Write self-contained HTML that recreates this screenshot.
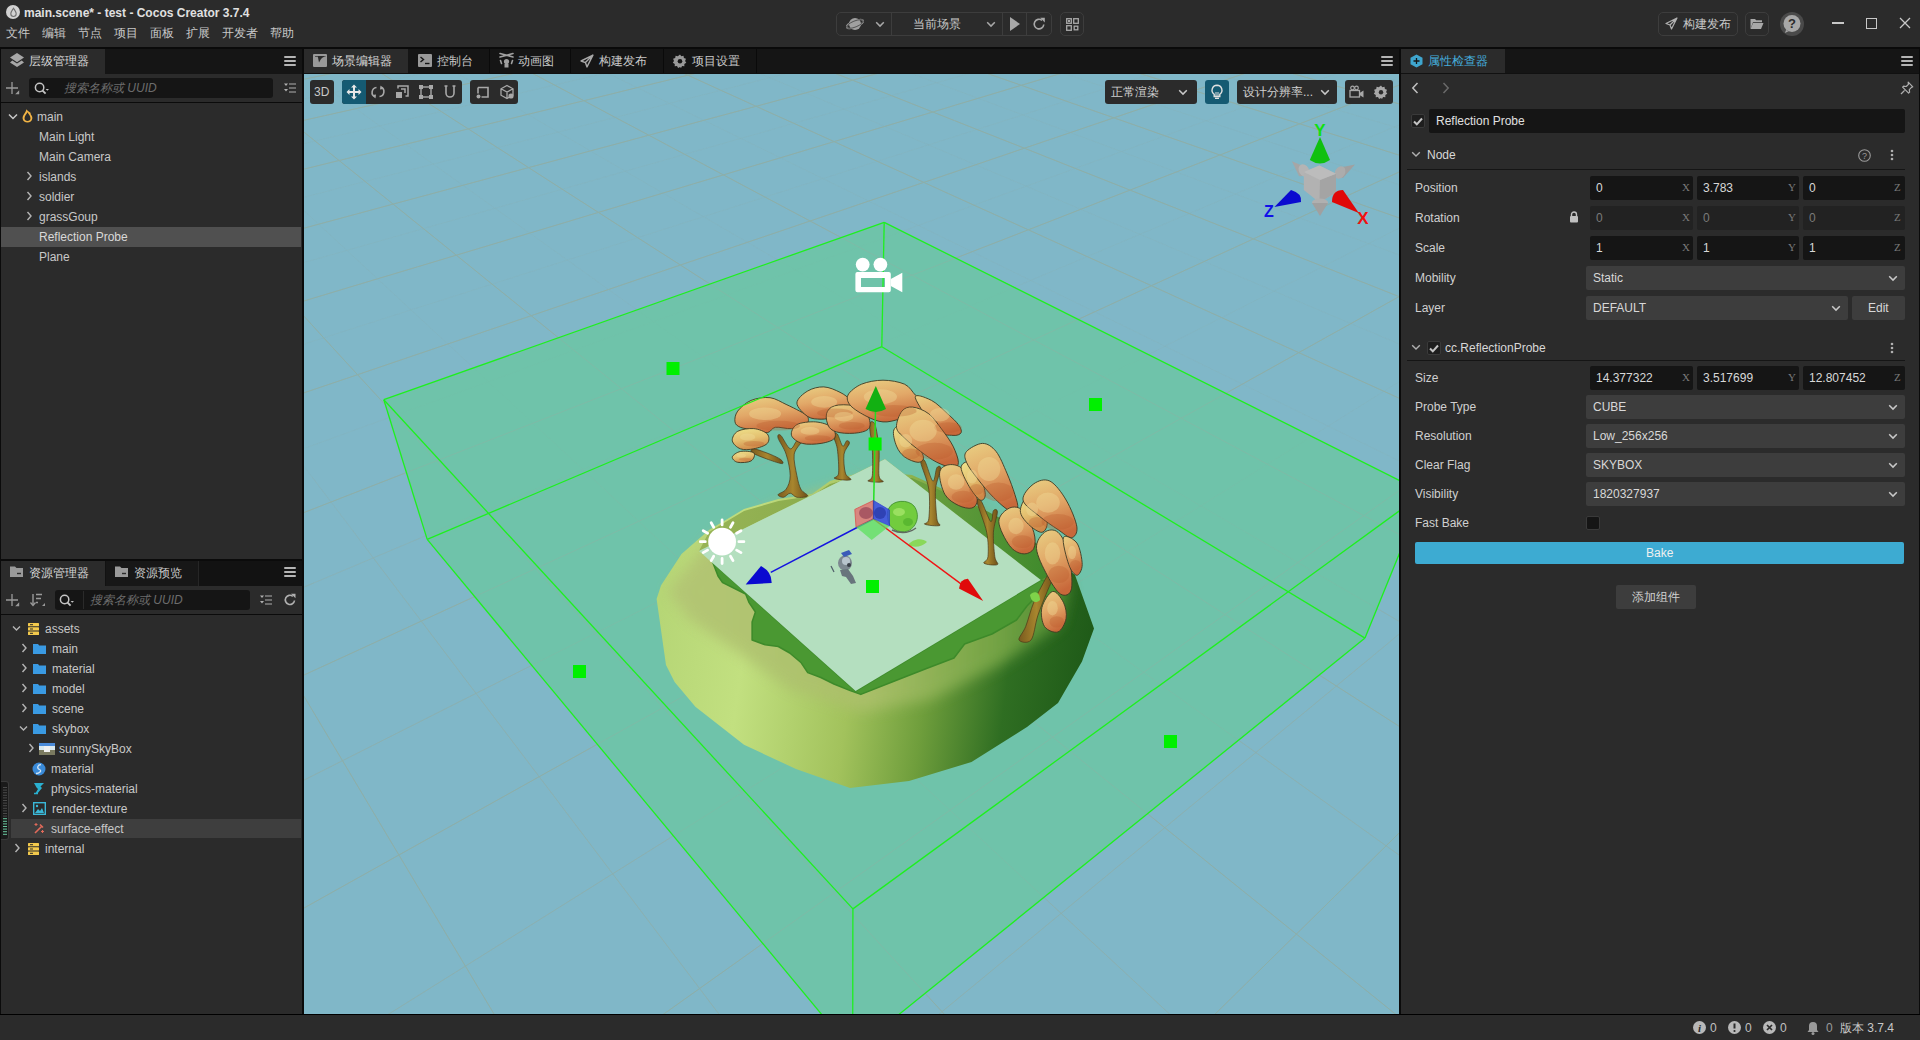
<!DOCTYPE html>
<html><head><meta charset="utf-8">
<style>
*{box-sizing:border-box;margin:0;padding:0}
html,body{width:1920px;height:1040px;overflow:hidden;background:#2b2b2b;font-family:"Liberation Sans",sans-serif;font-size:12px;color:#c8c8c8}
.a{position:absolute}
.t{position:absolute;white-space:nowrap;line-height:14px}
.sep{position:absolute;background:#0b0b0b}
svg{position:absolute;overflow:visible}
.btn{position:absolute;border:1px solid #3d3d3d;border-radius:5px}
.tabbar{position:absolute;background:#151515}
.tab{position:absolute;background:#2b2b2b}
.inp{position:absolute;background:#151515;border-radius:3px}
.sel{position:absolute;background:#3d3d3d;border-radius:2px}
.ham{position:absolute;width:12px;height:10px}
.ham i{position:absolute;left:0;width:12px;height:2px;background:#b4b4b4;border-radius:1px}
</style></head><body>
<!-- TITLE BAR -->
<div class="a" style="left:0;top:0;width:1920px;height:47px;background:#2b2b2b"></div>
<svg style="left:6px;top:5px" width="15" height="15" viewBox="0 0 15 15"><circle cx="7" cy="7" r="7" fill="#d2d2d2"/><path d="M7.5 3.2 C6 5.5 4.8 7 4.8 8.8 A2.7 2.7 0 0 0 10.2 8.8 C10.2 7 9 5.5 7.5 3.2Z" fill="none" stroke="#707070" stroke-width="1.1"/></svg>
<div class="t" style="left:24px;top:6px;font-weight:bold;color:#e0e0e0">main.scene* - test - Cocos Creator 3.7.4</div>
<div class="t" style="left:6px;top:26px;color:#c8c8c8;word-spacing:0">文件</div>
<div class="t" style="left:42px;top:26px">编辑</div>
<div class="t" style="left:78px;top:26px">节点</div>
<div class="t" style="left:114px;top:26px">项目</div>
<div class="t" style="left:150px;top:26px">面板</div>
<div class="t" style="left:186px;top:26px">扩展</div>
<div class="t" style="left:222px;top:26px">开发者</div>
<div class="t" style="left:270px;top:26px">帮助</div>

<div class="sep" style="left:0;top:47px;width:1920px;height:2px;background:#0a0a0a"></div>

<!-- STATUS BAR -->
<div class="a" style="left:0;top:1015px;width:1920px;height:25px;background:#2b2b2b"></div>
<div class="sep" style="left:0;top:1014px;width:1920px;height:1px;background:#000"></div>


<!-- HIERARCHY PANEL -->
<div class="tabbar" style="left:1px;top:49px;width:301px;height:25px"></div>
<div class="tab" style="left:1px;top:49px;width:104px;height:25px"></div>
<svg style="left:10px;top:53px" width="14" height="15" viewBox="0 0 14 15"><path d="M7 0 L14 4.6 L7 9.2 L0 4.6Z" fill="#a8a8a8"/><path d="M2.3 7.6 L0 9.4 L7 14 L14 9.4 L11.7 7.6 L7 10.6Z" fill="#a8a8a8"/></svg>
<div class="t" style="left:29px;top:54px;color:#d6d6d6">层级管理器</div>
<div class="ham" style="left:284px;top:56px"><i style="top:0"></i><i style="top:4px"></i><i style="top:8px"></i></div>
<svg style="left:6px;top:82px" width="14" height="13" viewBox="0 0 14 13"><path d="M6 0v12M0 6h12" stroke="#9a9a9a" stroke-width="1.3"/><path d="M13.2 8.2v4h-4z" fill="#9a9a9a"/></svg>
<div class="inp" style="left:29px;top:78px;width:244px;height:20px"></div>
<svg style="left:34px;top:82px" width="16" height="13" viewBox="0 0 16 13"><circle cx="5.6" cy="5.5" r="4.2" fill="none" stroke="#c4c4c4" stroke-width="1.5"/><path d="M8.6 8.6l3 3" stroke="#c4c4c4" stroke-width="1.8"/><path d="M11.6 7h3.4l-1.7 1.8z" fill="#c4c4c4"/></svg>
<div class="t" style="left:64px;top:81px;color:#6c6c6c;font-style:italic">搜索名称或 UUID</div>
<svg style="left:284px;top:83px" width="12" height="11" viewBox="0 0 12 11"><path d="M0 0.5h4l-2 2.5z M0 6h4l-2 2.5z" fill="#b0b0b0"/><path d="M5 1h7M5 5h7M5 9h7" stroke="#b0b0b0" stroke-width="1.2"/></svg>
<div class="sep" style="left:1px;top:102px;width:301px;height:1px"></div>

<svg style="left:8px;top:113px" width="10" height="8" viewBox="0 0 10 8"><path d="M1 1.5l4 4 4-4" fill="none" stroke="#c8c8c8" stroke-width="1.5"/></svg>
<svg style="left:22px;top:109px" width="11" height="14" viewBox="0 0 11 14"><path fill-rule="evenodd" fill="#f2b445" d="M4.3 0.2 C5 1 5.5 1.5 6 2 L8.5 3.8 L8.8 5.5 C10 6.8 10.5 8 10.3 9.5 C10 12 8 13.5 5.5 13.5 C3 13.5 0.8 12 0.6 9.5 C0.4 7.5 1.5 5.8 2.6 4.2 C3.5 3 4.3 1.5 4.3 0.2Z M5.5 3.2 C4.5 5 2.5 7 2.5 9.3 C2.5 11 3.8 12 5.5 12 C7.2 12 8.5 11 8.5 9.3 C8.5 7 6.5 5 5.5 3.2Z"/></svg>
<div class="t" style="left:37px;top:110px">main</div>
<div class="t" style="left:39px;top:130px">Main Light</div>
<div class="t" style="left:39px;top:150px">Main Camera</div>
<svg style="left:26px;top:171px" width="7" height="10" viewBox="0 0 7 10"><path d="M1.5 1l3.5 4-3.5 4" fill="none" stroke="#b4b4b4" stroke-width="1.4"/></svg>
<div class="t" style="left:39px;top:170px">islands</div>
<svg style="left:26px;top:191px" width="7" height="10" viewBox="0 0 7 10"><path d="M1.5 1l3.5 4-3.5 4" fill="none" stroke="#b4b4b4" stroke-width="1.4"/></svg>
<div class="t" style="left:39px;top:190px">soldier</div>
<svg style="left:26px;top:211px" width="7" height="10" viewBox="0 0 7 10"><path d="M1.5 1l3.5 4-3.5 4" fill="none" stroke="#b4b4b4" stroke-width="1.4"/></svg>
<div class="t" style="left:39px;top:210px">grassGoup</div>
<div class="a" style="left:1px;top:227px;width:300px;height:20px;background:#505050"></div>
<div class="t" style="left:39px;top:230px;color:#d8d8d8">Reflection Probe</div>
<div class="t" style="left:39px;top:250px">Plane</div>

<div class="sep" style="left:1px;top:559px;width:301px;height:2px"></div>

<!-- ASSETS PANEL -->
<div class="tabbar" style="left:1px;top:561px;width:301px;height:25px;background:#121212"></div>
<div class="tab" style="left:1px;top:561px;width:104px;height:25px"></div>
<div class="a" style="left:106px;top:561px;width:93px;height:25px;background:#171717;border-right:1px solid #262626"></div>
<svg style="left:9px;top:565px" width="15" height="13" viewBox="0 0 15 13"><path d="M1 1.5h5l1.5 1.5H14v9H1z" fill="#9a9a9a"/><path d="M8 8.5h4" stroke="#2b2b2b" stroke-width="1.4"/></svg>
<div class="t" style="left:29px;top:566px;color:#d6d6d6">资源管理器</div>
<svg style="left:114px;top:565px" width="15" height="13" viewBox="0 0 15 13"><path d="M1 1.5h5l1.5 1.5H14v9H1z" fill="#9a9a9a"/><path d="M8 8.5h4" stroke="#2b2b2b" stroke-width="1.4"/></svg>
<div class="t" style="left:134px;top:566px;color:#c8c8c8">资源预览</div>
<div class="ham" style="left:284px;top:567px"><i style="top:0"></i><i style="top:4px"></i><i style="top:8px"></i></div>
<svg style="left:6px;top:594px" width="14" height="13" viewBox="0 0 14 13"><path d="M6 0v12M0 6h12" stroke="#9a9a9a" stroke-width="1.3"/><path d="M13.2 8.2v4h-4z" fill="#9a9a9a"/></svg>
<svg style="left:30px;top:593px" width="16" height="14" viewBox="0 0 16 14"><path d="M3 1v11" stroke="#9a9a9a" stroke-width="1.4"/><path d="M0.5 9.5l2.5 3 2.5-3" fill="none" stroke="#9a9a9a" stroke-width="1.3"/><path d="M6 1.5h6M6 5.5h5M6 9.5h2" stroke="#9a9a9a" stroke-width="1.4"/><path d="M15 10v3h-3z" fill="#9a9a9a"/></svg>
<div class="inp" style="left:55px;top:590px;width:195px;height:20px"></div>
<div class="a" style="left:83px;top:591px;width:1px;height:18px;background:#2a2a2a"></div>
<svg style="left:59px;top:594px" width="16" height="13" viewBox="0 0 16 13"><circle cx="5.6" cy="5.5" r="4.2" fill="none" stroke="#c4c4c4" stroke-width="1.5"/><path d="M8.6 8.6l3 3" stroke="#c4c4c4" stroke-width="1.8"/><path d="M11.6 7h3.4l-1.7 1.8z" fill="#c4c4c4"/></svg>
<div class="t" style="left:90px;top:593px;color:#6c6c6c;font-style:italic">搜索名称或 UUID</div>
<svg style="left:260px;top:595px" width="12" height="11" viewBox="0 0 12 11"><path d="M0 0.5h4l-2 2.5z M0 6h4l-2 2.5z" fill="#b0b0b0"/><path d="M5 1h7M5 5h7M5 9h7" stroke="#b0b0b0" stroke-width="1.2"/></svg>
<svg style="left:283px;top:593px" width="14" height="14" viewBox="0 0 14 14"><path d="M11.5 7.5A4.6 4.6 0 1 1 9.8 3.3" fill="none" stroke="#b0b0b0" stroke-width="1.6"/><path d="M8 0.8h4.5v4.5z" fill="#b0b0b0"/></svg>
<div class="sep" style="left:1px;top:614px;width:301px;height:1px"></div>

<!-- ASSET TREE --><svg style="left:12px;top:625px" width="9" height="7" viewBox="0 0 9 7"><path d="M1 1.5l3.5 3.5 3.5-3.5" fill="none" stroke="#b4b4b4" stroke-width="1.4"/></svg><svg style="left:28px;top:623px" width="11" height="12" viewBox="0 0 11 12"><g fill="#f2c94c"><rect x="0" y="0" width="11" height="3.3" rx="0.5"/><rect x="0" y="4.3" width="11" height="3.3" rx="0.5"/><rect x="0" y="8.6" width="11" height="3.3" rx="0.5"/></g><g fill="#2b2b2b"><rect x="2" y="1.2" width="3" height="1"/><rect x="2" y="5.5" width="3" height="1"/><rect x="2" y="9.8" width="3" height="1"/></g></svg><div class="t" style="left:45px;top:622px;color:#c8c8c8">assets</div><svg style="left:21px;top:643px" width="7" height="10" viewBox="0 0 7 10"><path d="M1.5 1l3.5 4-3.5 4" fill="none" stroke="#b4b4b4" stroke-width="1.4"/></svg><svg style="left:33px;top:644px" width="13" height="10" viewBox="0 0 13 10"><path d="M0 0h5l1.2 1.5H13V10H0Z" fill="#3a9ae2"/></svg><div class="t" style="left:52px;top:642px;color:#c8c8c8">main</div><svg style="left:21px;top:663px" width="7" height="10" viewBox="0 0 7 10"><path d="M1.5 1l3.5 4-3.5 4" fill="none" stroke="#b4b4b4" stroke-width="1.4"/></svg><svg style="left:33px;top:664px" width="13" height="10" viewBox="0 0 13 10"><path d="M0 0h5l1.2 1.5H13V10H0Z" fill="#3a9ae2"/></svg><div class="t" style="left:52px;top:662px;color:#c8c8c8">material</div><svg style="left:21px;top:683px" width="7" height="10" viewBox="0 0 7 10"><path d="M1.5 1l3.5 4-3.5 4" fill="none" stroke="#b4b4b4" stroke-width="1.4"/></svg><svg style="left:33px;top:684px" width="13" height="10" viewBox="0 0 13 10"><path d="M0 0h5l1.2 1.5H13V10H0Z" fill="#3a9ae2"/></svg><div class="t" style="left:52px;top:682px;color:#c8c8c8">model</div><svg style="left:21px;top:703px" width="7" height="10" viewBox="0 0 7 10"><path d="M1.5 1l3.5 4-3.5 4" fill="none" stroke="#b4b4b4" stroke-width="1.4"/></svg><svg style="left:33px;top:704px" width="13" height="10" viewBox="0 0 13 10"><path d="M0 0h5l1.2 1.5H13V10H0Z" fill="#3a9ae2"/></svg><div class="t" style="left:52px;top:702px;color:#c8c8c8">scene</div><svg style="left:19px;top:725px" width="9" height="7" viewBox="0 0 9 7"><path d="M1 1.5l3.5 3.5 3.5-3.5" fill="none" stroke="#b4b4b4" stroke-width="1.4"/></svg><svg style="left:33px;top:724px" width="13" height="10" viewBox="0 0 13 10"><path d="M0 0h5l1.2 1.5H13V10H0Z" fill="#3a9ae2"/></svg><div class="t" style="left:52px;top:722px;color:#c8c8c8">skybox</div><svg style="left:28px;top:743px" width="7" height="10" viewBox="0 0 7 10"><path d="M1.5 1l3.5 4-3.5 4" fill="none" stroke="#b4b4b4" stroke-width="1.4"/></svg><svg style="left:39px;top:743px" width="16" height="12" viewBox="0 0 16 12"><rect x="0" y="0" width="16" height="12" fill="#8aa8c8"/><rect x="0" y="0" width="16" height="3" fill="#4a8ad8"/><rect x="0" y="3" width="16" height="4" fill="#d8e8f0"/><rect x="0" y="7" width="16" height="5" fill="#7a7a60"/><rect x="5" y="3" width="6" height="6" fill="#f0f0f0"/></svg><div class="t" style="left:59px;top:742px;color:#c8c8c8">sunnySkyBox</div><svg style="left:32px;top:762px" width="14" height="14" viewBox="0 0 14 14"><circle cx="7" cy="7" r="6.5" fill="#3a8ad8"/><path d="M9 2.5C5.5 3 4.5 6 7.5 7.5S7 11.5 4 11.5" fill="none" stroke="#d0e4f4" stroke-width="1.3"/></svg><div class="t" style="left:51px;top:762px;color:#c8c8c8">material</div><svg style="left:33px;top:782px" width="12" height="13" viewBox="0 0 12 13"><path d="M1 1h10L7.5 4.5 9 6 4 12H2l3-5L3.5 5.5Z" fill="#2ab0d0"/><path d="M1 11.5h4" stroke="#2ab0d0" stroke-width="1.5"/></svg><div class="t" style="left:51px;top:782px;color:#c8c8c8">physics-material</div><svg style="left:21px;top:803px" width="7" height="10" viewBox="0 0 7 10"><path d="M1.5 1l3.5 4-3.5 4" fill="none" stroke="#b4b4b4" stroke-width="1.4"/></svg><svg style="left:33px;top:802px" width="13" height="13" viewBox="0 0 13 13"><rect x="0.7" y="0.7" width="11.6" height="11.6" fill="none" stroke="#3ab8d8" stroke-width="1.4"/><path d="M2 11l3-4 2 2 2-3 2 5Z" fill="#3ab8d8"/><circle cx="4" cy="4" r="1.2" fill="#3ab8d8"/></svg><div class="t" style="left:52px;top:802px;color:#c8c8c8">render-texture</div><div class="a" style="left:11px;top:819px;width:290px;height:19px;background:#3e3e3e"></div><svg style="left:33px;top:822px" width="12" height="13" viewBox="0 0 12 13"><path d="M2 11L9 4M7 2.5l3 3" stroke="#e06a5a" stroke-width="1.6"/><path d="M3 1v3M1.5 2.5h3M9.5 8v3M8 9.5h3" stroke="#e06a5a" stroke-width="1.1"/></svg><div class="t" style="left:51px;top:822px;color:#c8c8c8">surface-effect</div><svg style="left:14px;top:843px" width="7" height="10" viewBox="0 0 7 10"><path d="M1.5 1l3.5 4-3.5 4" fill="none" stroke="#b4b4b4" stroke-width="1.4"/></svg><svg style="left:28px;top:843px" width="11" height="12" viewBox="0 0 11 12"><g fill="#f2c94c"><rect x="0" y="0" width="11" height="3.3" rx="0.5"/><rect x="0" y="4.3" width="11" height="3.3" rx="0.5"/><rect x="0" y="8.6" width="11" height="3.3" rx="0.5"/></g><g fill="#2b2b2b"><rect x="2" y="1.2" width="3" height="1"/><rect x="2" y="5.5" width="3" height="1"/><rect x="2" y="9.8" width="3" height="1"/></g></svg><div class="t" style="left:45px;top:842px;color:#c8c8c8">internal</div><div class="a" style="left:0px;top:781px;width:9px;height:59px;background:#1a1a1a;border:1px solid #3a3a3a;border-left:none;border-radius:0 3px 3px 0"></div><svg style="left:3px;top:786px" width="4" height="50" viewBox="0 0 4 50"><g stroke-width="1"><path d="M0 1.5h4" stroke="#4a4a4a"/><path d="M0 4.1h4" stroke="#4a4a4a"/><path d="M0 6.7h4" stroke="#4a4a4a"/><path d="M0 9.3h4" stroke="#4a4a4a"/><path d="M0 11.9h4" stroke="#4a4a4a"/><path d="M0 14.5h4" stroke="#4a4a4a"/><path d="M0 17.1h4" stroke="#4a4a4a"/><path d="M0 19.7h4" stroke="#4a4a4a"/><path d="M0 22.3h4" stroke="#4a4a4a"/><path d="M0 24.900000000000002h4" stroke="#4a4a4a"/><path d="M0 27.5h4" stroke="#4a4a4a"/><path d="M0 30.1h4" stroke="#4a4a4a"/><path d="M0 32.7h4" stroke="#6ac8a0"/><path d="M0 35.300000000000004h4" stroke="#6ac8a0"/><path d="M0 37.9h4" stroke="#6ac8a0"/><path d="M0 40.5h4" stroke="#6ac8a0"/><path d="M0 43.1h4" stroke="#6ac8a0"/><path d="M0 45.7h4" stroke="#6ac8a0"/><path d="M0 48.300000000000004h4" stroke="#6ac8a0"/></g></svg>
<!--SCENE--><svg style="left:304px;top:74px" width="1095" height="940" viewBox="304 74 1095 940">
<defs>
<clipPath id="sc"><rect x="304" y="74" width="1095" height="940"/></clipPath>
<linearGradient id="isl" gradientUnits="userSpaceOnUse" x1="656" y1="640" x2="1094" y2="700">
<stop offset="0" stop-color="#b6d676"/><stop offset="0.2" stop-color="#c2e080"/><stop offset="0.45" stop-color="#a2c25c"/><stop offset="0.62" stop-color="#6f9e3c"/><stop offset="0.8" stop-color="#2f6e22"/><stop offset="1" stop-color="#1d5817"/>
</linearGradient>
<linearGradient id="islTop" gradientUnits="userSpaceOnUse" x1="660" y1="600" x2="1080" y2="600">
<stop offset="0" stop-color="#b3c474"/><stop offset="0.5" stop-color="#abc06a"/><stop offset="0.8" stop-color="#7aa848"/><stop offset="1" stop-color="#4a8a30"/>
</linearGradient>
<filter id="blur6" x="-20%" y="-20%" width="140%" height="140%"><feGaussianBlur stdDeviation="7"/></filter>
<filter id="blur2" x="-20%" y="-20%" width="140%" height="140%"><feGaussianBlur stdDeviation="1.2"/></filter>
<linearGradient id="trunk" x1="0" y1="0" x2="1" y2="0"><stop offset="0" stop-color="#7a5a1e"/><stop offset="0.5" stop-color="#a8862e"/><stop offset="1" stop-color="#6e5018"/></linearGradient>
<linearGradient id="ground" gradientUnits="userSpaceOnUse" x1="700" y1="500" x2="1050" y2="560"><stop offset="0" stop-color="#98b456"/><stop offset="0.35" stop-color="#8aac4c"/><stop offset="0.7" stop-color="#5f9a3a"/><stop offset="1" stop-color="#3f8a2c"/></linearGradient>
<linearGradient id="leafY" x1="0.2" y1="0" x2="0.5" y2="1"><stop offset="0" stop-color="#eee08a"/><stop offset="0.5" stop-color="#e4c070"/><stop offset="1" stop-color="#d08848"/></linearGradient>
<linearGradient id="leaf" x1="0.2" y1="0" x2="0.5" y2="1"><stop offset="0" stop-color="#e8cc80"/><stop offset="0.45" stop-color="#e2a868"/><stop offset="1" stop-color="#c8683a"/></linearGradient>
</defs>
<g clip-path="url(#sc)">
<rect x="304" y="74" width="1095" height="940" fill="#80b7c8"/>
<g stroke="#a39c9c" stroke-width="1" fill="none" opacity="0.55"><path opacity="0.12" d="M320.8 57.6L292.3 63.3M292.3 63.3L263.2 69.1M500.9 56.6L474.7 62.2M474.7 62.2L447.8 68.0M447.8 68.0L420.3 73.9M420.3 73.9L392.0 80.0M392.0 80.0L363.0 86.2M363.0 86.2L333.3 92.6M333.3 92.6L302.8 99.1M302.8 99.1L271.5 105.8M1300.0 54.6L1324.9 61.4M1324.9 61.4L1350.5 68.4M1350.5 68.4L1376.9 75.6M1376.9 75.6L1404.2 83.1M1404.2 83.1L1432.3 90.7M680.8 55.5L656.8 61.1M656.8 61.1L632.2 66.9M632.2 66.9L606.9 72.8M606.9 72.8L581.0 78.8M581.0 78.8L554.5 85.0M554.5 85.0L527.3 91.4M527.3 91.4L499.3 97.9M499.3 97.9L470.6 104.6M470.6 104.6L441.2 111.5M441.2 111.5L410.9 118.6M410.9 118.6L379.8 125.9M379.8 125.9L347.9 133.3M347.9 133.3L315.0 141.0M315.0 141.0L281.2 148.9M1160.5 56.8L1183.4 63.7M1183.4 63.7L1206.9 70.7M1206.9 70.7L1231.2 78.0M1231.2 78.0L1256.3 85.5M1256.3 85.5L1282.1 93.2M1282.1 93.2L1308.8 101.3M1308.8 101.3L1336.4 109.5M1336.4 109.5L1364.9 118.1M1364.9 118.1L1394.5 126.9M1394.5 126.9L1425.0 136.1M860.4 54.5L838.6 60.1M838.6 60.1L816.2 65.8M816.2 65.8L793.3 71.7M793.3 71.7L769.8 77.7M769.8 77.7L745.6 83.9M745.6 83.9L720.9 90.3M720.9 90.3L695.5 96.8M695.5 96.8L669.5 103.4M669.5 103.4L642.7 110.3M642.7 110.3L615.2 117.4M615.2 117.4L587.0 124.6M587.0 124.6L558.0 132.1M558.0 132.1L528.1 139.7M528.1 139.7L497.4 147.6M497.4 147.6L465.8 155.7M465.8 155.7L433.2 164.1M433.2 164.1L399.7 172.7M399.7 172.7L365.1 181.5M365.1 181.5L329.5 190.7M329.5 190.7L292.7 200.1M292.7 200.1L254.8 209.8M1020.1 59.0L1040.9 65.9M1040.9 65.9L1062.3 73.0M1062.3 73.0L1084.4 80.4M1084.4 80.4L1107.2 87.9M1107.2 87.9L1130.8 95.8M1130.8 95.8L1155.1 103.8M1155.1 103.8L1180.2 112.2M1180.2 112.2L1206.2 120.8M1206.2 120.8L1233.1 129.7M1233.1 129.7L1260.9 139.0M1260.9 139.0L1289.8 148.6M1289.8 148.6L1319.6 158.5M1319.6 158.5L1350.6 168.8M1350.6 168.8L1382.8 179.5M1382.8 179.5L1416.2 190.5M1020.1 59.0L999.9 64.7M999.9 64.7L979.3 70.6M979.3 70.6L958.2 76.6M958.2 76.6L936.5 82.8M936.5 82.8L914.2 89.1M914.2 89.1L891.4 95.6M891.4 95.6L868.0 102.3M868.0 102.3L843.9 109.1M843.9 109.1L819.2 116.1M819.2 116.1L793.8 123.3M793.8 123.3L767.7 130.8M767.7 130.8L740.8 138.4M740.8 138.4L713.2 146.3M713.2 146.3L684.7 154.3M684.7 154.3L655.5 162.7M655.5 162.7L625.3 171.2M625.3 171.2L594.2 180.1M594.2 180.1L562.2 189.2M562.2 189.2L529.1 198.6M529.1 198.6L495.0 208.3M495.0 208.3L459.8 218.3M459.8 218.3L423.4 228.6M423.4 228.6L385.8 239.3M385.8 239.3L346.9 250.4M346.9 250.4L306.6 261.8M306.6 261.8L264.9 273.7M860.4 54.5L878.6 61.2M878.6 61.2L897.3 68.2M897.3 68.2L916.6 75.4M916.6 75.4L936.5 82.8M936.5 82.8L957.0 90.4M957.0 90.4L978.2 98.3M978.2 98.3L1000.1 106.5M1000.1 106.5L1022.8 114.9M1022.8 114.9L1046.2 123.6M1046.2 123.6L1070.4 132.6M1070.4 132.6L1095.5 141.9M1095.5 141.9L1121.4 151.6M1121.4 151.6L1148.4 161.6M1148.4 161.6L1176.3 172.0M1176.3 172.0L1205.3 182.8M1205.3 182.8L1235.4 194.0M1235.4 194.0L1266.8 205.7M1266.8 205.7L1299.3 217.8M1299.3 217.8L1333.3 230.4M1333.3 230.4L1368.6 243.6M1368.6 243.6L1405.5 257.3M1405.5 257.3L1443.9 271.6M1201.3 58.0L1183.4 63.7M1183.4 63.7L1165.1 69.5M1165.1 69.5L1146.3 75.5M1146.3 75.5L1127.0 81.6M1127.0 81.6L1107.2 87.9M1107.2 87.9L1086.9 94.4M1086.9 94.4L1066.1 101.1M1066.1 101.1L1044.7 107.9M1044.7 107.9L1022.8 114.9M1022.8 114.9L1000.2 122.1M1000.2 122.1L977.0 129.5M977.0 129.5L953.1 137.1M953.1 137.1L928.6 144.9M928.6 144.9L903.3 153.0M903.3 153.0L877.3 161.3M877.3 161.3L850.5 169.8M850.5 169.8L822.9 178.6M822.9 178.6L794.4 187.7M794.4 187.7L765.1 197.1M765.1 197.1L734.7 206.7M734.7 206.7L703.5 216.7M703.5 216.7L671.1 227.0M671.1 227.0L637.7 237.7M637.7 237.7L603.2 248.7M603.2 248.7L567.4 260.1M567.4 260.1L530.4 271.9M530.4 271.9L492.0 284.1M492.0 284.1L452.3 296.8M452.3 296.8L411.0 309.9M411.0 309.9L368.2 323.6M368.2 323.6L323.7 337.8M323.7 337.8L277.5 352.5M719.9 56.6L736.0 63.5M736.0 63.5L752.6 70.5M752.6 70.5L769.8 77.7M769.8 77.7L787.4 85.2M787.4 85.2L805.6 92.9M805.6 92.9L824.5 100.9M824.5 100.9L843.9 109.1M843.9 109.1L864.0 117.6M864.0 117.6L884.8 126.4M884.8 126.4L906.3 135.5M906.3 135.5L928.6 144.9M928.6 144.9L951.7 154.7M951.7 154.7L975.6 164.8M975.6 164.8L1000.4 175.3M1000.4 175.3L1026.2 186.2M1026.2 186.2L1053.0 197.5M1053.0 197.5L1080.8 209.3M1080.8 209.3L1109.8 221.6M1109.8 221.6L1139.9 234.3M1139.9 234.3L1171.4 247.6M1171.4 247.6L1204.2 261.5M1204.2 261.5L1238.4 276.0M1238.4 276.0L1274.2 291.1M1274.2 291.1L1311.7 307.0M1311.7 307.0L1350.9 323.6M1350.9 323.6L1392.0 340.9M1392.0 340.9L1435.1 359.2M1382.2 56.9L1366.5 62.6M1366.5 62.6L1350.5 68.4M1350.5 68.4L1334.0 74.4M1334.0 74.4L1317.2 80.5M1317.2 80.5L1299.9 86.8M1299.9 86.8L1282.1 93.2M1282.1 93.2L1263.9 99.9M1263.9 99.9L1245.2 106.7M1245.2 106.7L1226.0 113.6M1226.0 113.6L1206.2 120.8M1206.2 120.8L1185.9 128.2M1185.9 128.2L1165.0 135.8M1165.0 135.8L1143.6 143.6M1143.6 143.6L1121.4 151.6M1121.4 151.6L1098.7 159.9M1098.7 159.9L1075.2 168.4M1075.2 168.4L1051.1 177.2M1051.1 177.2L1026.2 186.2M1026.2 186.2L1000.5 195.5M1000.5 195.5L974.0 205.2M974.0 205.2L946.6 215.1M946.6 215.1L918.3 225.4M918.3 225.4L889.1 236.0M889.1 236.0L858.9 247.0M858.9 247.0L827.6 258.3M827.6 258.3L795.2 270.1M795.2 270.1L761.7 282.3M761.7 282.3L726.9 294.9M726.9 294.9L690.9 308.0M690.9 308.0L653.4 321.6M653.4 321.6L614.5 335.7M614.5 335.7L574.1 350.4M574.1 350.4L532.0 365.7M532.0 365.7L488.2 381.6M488.2 381.6L442.6 398.2M442.6 398.2L395.0 415.4M395.0 415.4L345.3 433.5M345.3 433.5L293.4 452.3M293.4 452.3L239.1 472.1M578.4 58.8L592.5 65.7M592.5 65.7L606.9 72.8M606.9 72.8L621.8 80.1M621.8 80.1L637.2 87.6M637.2 87.6L653.1 95.4M653.1 95.4L669.5 103.4M669.5 103.4L686.4 111.7M686.4 111.7L703.9 120.3M703.9 120.3L722.1 129.2M722.1 129.2L740.8 138.4M740.8 138.4L760.2 147.9M760.2 147.9L780.4 157.8M780.4 157.8L801.2 168.0M801.2 168.0L822.9 178.6M822.9 178.6L845.4 189.6M845.4 189.6L868.7 201.1M868.7 201.1L893.0 213.0M893.0 213.0L918.3 225.4M918.3 225.4L944.7 238.3M944.7 238.3L972.1 251.7M972.1 251.7L1000.8 265.8M1000.8 265.8L1030.7 280.4M1030.7 280.4L1062.0 295.8M1062.0 295.8L1094.7 311.8M1094.7 311.8L1129.0 328.6M1129.0 328.6L1165.0 346.2M1165.0 346.2L1202.7 364.7M1202.7 364.7L1242.4 384.1M1242.4 384.1L1284.1 404.6M1284.1 404.6L1328.1 426.1M1328.1 426.1L1374.6 448.9M1374.6 448.9L1423.7 473.0M1411.9 119.6L1394.5 126.9M1394.5 126.9L1376.5 134.5M1376.5 134.5L1358.1 142.2M1358.1 142.2L1339.2 150.2M1339.2 150.2L1319.6 158.5M1319.6 158.5L1299.5 167.0M1299.5 167.0L1278.8 175.7M1278.8 175.7L1257.5 184.7M1257.5 184.7L1235.4 194.0M1235.4 194.0L1212.7 203.6M1212.7 203.6L1189.2 213.5M1189.2 213.5L1165.0 223.8M1165.0 223.8L1139.9 234.3M1139.9 234.3L1114.0 245.3M1114.0 245.3L1087.2 256.6M1087.2 256.6L1059.5 268.3M1059.5 268.3L1030.7 280.4M1030.7 280.4L1000.9 293.0M1000.9 293.0L970.0 306.1M970.0 306.1L937.9 319.6M937.9 319.6L904.6 333.7M904.6 333.7L869.9 348.3M869.9 348.3L833.9 363.5M833.9 363.5L796.3 379.4M424.3 54.3L435.9 61.0M435.9 61.0L447.8 68.0M447.8 68.0L460.1 75.1M460.1 75.1L472.8 82.5M472.8 82.5L485.8 90.1M485.8 90.1L499.3 97.9M499.3 97.9L513.3 106.0M513.3 106.0L527.7 114.4M527.7 114.4L542.6 123.1M542.6 123.1L558.0 132.1M558.0 132.1L573.9 141.3M573.9 141.3L590.4 150.9M590.4 150.9L607.6 160.9M607.6 160.9L625.3 171.2M625.3 171.2L643.7 181.9M643.7 181.9L662.9 193.1M662.9 193.1L682.8 204.7M682.8 204.7L703.5 216.7M703.5 216.7L725.0 229.2M725.0 229.2L747.4 242.3M747.4 242.3L770.8 255.9M770.8 255.9L795.2 270.1M795.2 270.1L820.7 284.9M820.7 284.9L847.4 300.4M847.4 300.4L875.3 316.7M875.3 316.7L904.6 333.7M904.6 333.7L935.2 351.5M935.2 351.5L967.4 370.3M967.4 370.3L1001.3 390.0M1411.1 222.1L1390.2 232.7M1390.2 232.7L1368.6 243.6M1368.6 243.6L1346.2 254.8M1346.2 254.8L1323.1 266.5M1323.1 266.5L1299.1 278.6M1299.1 278.6L1274.2 291.1M1274.2 291.1L1248.4 304.1M1248.4 304.1L1221.7 317.6M1221.7 317.6L1193.9 331.6M1193.9 331.6L1165.0 346.2M1165.0 346.2L1134.9 361.4M1134.9 361.4L1103.6 377.1M1103.6 377.1L1071.0 393.6M282.8 56.5L292.3 63.3M292.3 63.3L302.1 70.3M302.1 70.3L312.2 77.5M312.2 77.5L322.6 84.9M322.6 84.9L333.3 92.6M333.3 92.6L344.4 100.5M344.4 100.5L355.8 108.7M355.8 108.7L367.6 117.1M367.6 117.1L379.8 125.9M379.8 125.9L392.5 134.9M392.5 134.9L405.6 144.3M405.6 144.3L419.1 154.0M419.1 154.0L433.2 164.1M433.2 164.1L447.8 174.5M447.8 174.5L462.9 185.3M462.9 185.3L478.7 196.6M478.7 196.6L495.0 208.3M495.0 208.3L512.0 220.4M512.0 220.4L529.7 233.1M529.7 233.1L548.2 246.3M548.2 246.3L567.4 260.1M567.4 260.1L587.5 274.4M587.5 274.4L608.5 289.5M608.5 289.5L630.4 305.2M630.4 305.2L653.4 321.6M653.4 321.6L677.5 338.8M677.5 338.8L702.8 356.9M702.8 356.9L729.3 375.9M729.3 375.9L757.2 395.9M1410.0 374.9L1383.9 391.3M1383.9 391.3L1356.6 408.3M1356.6 408.3L1328.1 426.1M1328.1 426.1L1298.4 444.8M280.5 188.7L292.7 200.1M292.7 200.1L305.4 211.9M305.4 211.9L318.7 224.2M318.7 224.2L332.5 237.0M332.5 237.0L346.9 250.4M346.9 250.4L361.9 264.3M361.9 264.3L377.5 278.8M377.5 278.8L393.9 294.0M393.9 294.0L411.0 309.9M411.0 309.9L429.0 326.6M429.0 326.6L447.8 344.0M447.8 344.0L467.5 362.3M467.5 362.3L488.2 381.6M488.2 381.6L510.0 401.8M510.0 401.8L533.0 423.2M276.1 429.5L293.4 452.3M293.4 452.3L311.7 476.5"/><path opacity="1.0" d="M397.3 59.9L369.6 65.6M369.6 65.6L341.3 71.5M341.3 71.5L312.2 77.5M312.2 77.5L282.4 83.6M1408.4 63.8L1435.5 70.8M578.4 58.8L553.0 64.5M553.0 64.5L526.9 70.4M526.9 70.4L500.2 76.4M500.2 76.4L472.8 82.5M472.8 82.5L444.6 88.8M444.6 88.8L415.8 95.2M415.8 95.2L386.2 101.9M386.2 101.9L355.8 108.7M355.8 108.7L324.6 115.7M324.6 115.7L292.5 122.8M292.5 122.8L259.5 130.2M1242.2 59.1L1266.5 66.0M1266.5 66.0L1291.4 73.2M1291.4 73.2L1317.2 80.5M1317.2 80.5L1343.7 88.1M1343.7 88.1L1371.2 95.9M1371.2 95.9L1399.5 104.0M1399.5 104.0L1428.8 112.4M759.3 57.8L736.0 63.5M736.0 63.5L712.2 69.3M712.2 69.3L687.9 75.2M687.9 75.2L662.9 81.4M662.9 81.4L637.2 87.6M637.2 87.6L610.9 94.1M610.9 94.1L583.9 100.7M583.9 100.7L556.1 107.5M556.1 107.5L527.7 114.4M527.7 114.4L498.4 121.6M498.4 121.6L468.3 128.9M468.3 128.9L437.4 136.5M437.4 136.5L405.6 144.3M405.6 144.3L372.8 152.3M372.8 152.3L339.1 160.5M339.1 160.5L304.4 169.0M304.4 169.0L268.7 177.8M1079.8 54.6L1101.3 61.3M1101.3 61.3L1123.4 68.3M1123.4 68.3L1146.3 75.5M1146.3 75.5L1169.8 82.9M1169.8 82.9L1194.1 90.6M1194.1 90.6L1219.2 98.5M1219.2 98.5L1245.2 106.7M1245.2 106.7L1272.0 115.1M1272.0 115.1L1299.7 123.8M1299.7 123.8L1328.4 132.9M1328.4 132.9L1358.1 142.2M1358.1 142.2L1388.9 151.9M1388.9 151.9L1420.8 162.0M939.8 56.7L918.8 62.4M918.8 62.4L897.3 68.2M897.3 68.2L875.2 74.1M875.2 74.1L852.6 80.2M852.6 80.2L829.4 86.5M829.4 86.5L805.6 92.9M805.6 92.9L781.2 99.5M781.2 99.5L756.1 106.3M756.1 106.3L730.4 113.2M730.4 113.2L703.9 120.3M703.9 120.3L676.7 127.7M676.7 127.7L648.8 135.2M648.8 135.2L620.0 143.0M620.0 143.0L590.4 150.9M590.4 150.9L560.0 159.2M560.0 159.2L528.6 167.6M528.6 167.6L496.3 176.3M496.3 176.3L462.9 185.3M462.9 185.3L428.6 194.6M428.6 194.6L393.1 204.1M393.1 204.1L356.5 214.0M356.5 214.0L318.7 224.2M318.7 224.2L279.6 234.8M939.8 56.7L959.3 63.6M959.3 63.6L979.3 70.6M979.3 70.6L1000.0 77.9M1000.0 77.9L1021.3 85.3M1021.3 85.3L1043.4 93.1M1043.4 93.1L1066.1 101.1M1066.1 101.1L1089.6 109.3M1089.6 109.3L1113.9 117.8M1113.9 117.8L1139.0 126.6M1139.0 126.6L1165.0 135.8M1165.0 135.8L1192.0 145.2M1192.0 145.2L1219.9 155.0M1219.9 155.0L1248.8 165.2M1248.8 165.2L1278.8 175.7M1278.8 175.7L1310.0 186.6M1310.0 186.6L1342.4 198.0M1342.4 198.0L1376.1 209.8M1376.1 209.8L1411.1 222.1M1120.0 55.7L1101.3 61.3M1101.3 61.3L1082.0 67.1M1082.0 67.1L1062.3 73.0M1062.3 73.0L1042.1 79.1M1042.1 79.1L1021.3 85.3M1021.3 85.3L1000.1 91.7M1000.1 91.7L978.2 98.3M978.2 98.3L955.8 105.0M955.8 105.0L932.8 112.0M932.8 112.0L909.1 119.1M909.1 119.1L884.8 126.4M884.8 126.4L859.8 133.9M859.8 133.9L834.1 141.6M834.1 141.6L807.6 149.6M807.6 149.6L780.4 157.8M780.4 157.8L752.3 166.2M752.3 166.2L723.4 174.9M723.4 174.9L693.6 183.8M693.6 183.8L662.9 193.1M662.9 193.1L631.2 202.6M631.2 202.6L598.4 212.4M598.4 212.4L564.7 222.6M564.7 222.6L529.7 233.1M529.7 233.1L493.6 244.0M493.6 244.0L456.3 255.2M456.3 255.2L417.6 266.8M417.6 266.8L377.5 278.8M377.5 278.8L336.0 291.3M336.0 291.3L293.0 304.3M293.0 304.3L248.3 317.7M798.8 58.9L816.2 65.8M816.2 65.8L834.1 72.9M834.1 72.9L852.6 80.2M852.6 80.2L871.7 87.8M871.7 87.8L891.4 95.6M891.4 95.6L911.7 103.6M911.7 103.6L932.8 112.0M932.8 112.0L954.5 120.6M954.5 120.6L977.0 129.5M977.0 129.5L1000.3 138.7M1000.3 138.7L1024.4 148.2M1024.4 148.2L1049.3 158.1M1049.3 158.1L1075.2 168.4M1075.2 168.4L1102.1 179.0M1102.1 179.0L1130.0 190.1M1130.0 190.1L1159.1 201.6M1159.1 201.6L1189.2 213.5M1189.2 213.5L1220.6 226.0M1220.6 226.0L1253.4 238.9M1253.4 238.9L1287.5 252.4M1287.5 252.4L1323.1 266.5M1323.1 266.5L1360.2 281.2M1360.2 281.2L1399.1 296.6M1399.1 296.6L1439.8 312.7M1300.0 54.6L1283.4 60.3M1283.4 60.3L1266.5 66.0M1266.5 66.0L1249.1 71.9M1249.1 71.9L1231.2 78.0M1231.2 78.0L1212.9 84.2M1212.9 84.2L1194.1 90.6M1194.1 90.6L1174.9 97.1M1174.9 97.1L1155.1 103.8M1155.1 103.8L1134.8 110.7M1134.8 110.7L1113.9 117.8M1113.9 117.8L1092.4 125.1M1092.4 125.1L1070.4 132.6M1070.4 132.6L1047.7 140.3M1047.7 140.3L1024.4 148.2M1024.4 148.2L1000.3 156.4M1000.3 156.4L975.6 164.8M975.6 164.8L950.1 173.5M950.1 173.5L923.8 182.4M923.8 182.4L896.7 191.6M896.7 191.6L868.7 201.1M868.7 201.1L839.9 210.9M839.9 210.9L810.1 221.0M810.1 221.0L779.3 231.5M779.3 231.5L747.4 242.3M747.4 242.3L714.5 253.5M714.5 253.5L680.4 265.0M680.4 265.0L645.1 277.0M645.1 277.0L608.5 289.5M608.5 289.5L570.5 302.3M570.5 302.3L531.2 315.7M531.2 315.7L490.3 329.6M490.3 329.6L447.8 344.0M447.8 344.0L403.6 359.0M403.6 359.0L357.6 374.7M357.6 374.7L309.7 390.9M309.7 390.9L259.7 407.9M641.9 54.4L656.8 61.1M656.8 61.1L672.1 68.1M672.1 68.1L687.9 75.2M687.9 75.2L704.1 82.6M704.1 82.6L720.9 90.3M720.9 90.3L738.2 98.1M738.2 98.1L756.1 106.3M756.1 106.3L774.6 114.7M774.6 114.7L793.8 123.3M793.8 123.3L813.6 132.3M813.6 132.3L834.1 141.6M834.1 141.6L855.3 151.3M855.3 151.3L877.3 161.3M877.3 161.3L900.1 171.6M900.1 171.6L923.8 182.4M923.8 182.4L948.4 193.6M948.4 193.6L974.0 205.2M974.0 205.2L1000.6 217.2M1000.6 217.2L1028.3 229.8M1028.3 229.8L1057.1 242.9M1057.1 242.9L1087.2 256.6M1087.2 256.6L1118.6 270.8M1118.6 270.8L1151.4 285.7M1151.4 285.7L1185.7 301.3M1185.7 301.3L1221.7 317.6M1221.7 317.6L1259.3 334.7M1259.3 334.7L1298.8 352.6M1298.8 352.6L1340.3 371.5M1340.3 371.5L1383.9 391.3M1383.9 391.3L1429.8 412.1M1420.0 76.9L1404.2 83.1M1404.2 83.1L1387.9 89.4M1387.9 89.4L1371.2 95.9M1371.2 95.9L1354.0 102.6M1354.0 102.6L1336.4 109.5M1336.4 109.5L1318.3 116.6M1318.3 116.6L1299.7 123.8M1299.7 123.8L1280.6 131.3M1280.6 131.3L1260.9 139.0M1260.9 139.0L1240.7 146.9M1240.7 146.9L1219.9 155.0M1219.9 155.0L1198.4 163.4M1198.4 163.4L1176.3 172.0M1176.3 172.0L1153.5 180.9M1153.5 180.9L1130.0 190.1M1130.0 190.1L1105.8 199.5M1105.8 199.5L1080.8 209.3M1080.8 209.3L1055.0 219.4M1055.0 219.4L1028.3 229.8M1028.3 229.8L1000.7 240.6M1000.7 240.6L972.1 251.7M972.1 251.7L942.6 263.3M942.6 263.3L912.0 275.2M912.0 275.2L880.3 287.6M880.3 287.6L847.4 300.4M847.4 300.4L813.3 313.7M813.3 313.7L777.9 327.6M777.9 327.6L741.0 341.9M741.0 341.9L702.8 356.9M702.8 356.9L662.9 372.5M662.9 372.5L621.4 388.7M621.4 388.7L578.2 405.5M578.2 405.5L533.0 423.2M533.0 423.2L485.9 441.6M485.9 441.6L436.6 460.8M436.6 460.8L385.0 480.9M385.0 480.9L331.0 502.0M331.0 502.0L274.4 524.1M500.9 56.6L513.7 63.4M513.7 63.4L526.9 70.4M526.9 70.4L540.5 77.6M540.5 77.6L554.5 85.0M554.5 85.0L569.0 92.7M569.0 92.7L583.9 100.7M583.9 100.7L599.3 108.9M599.3 108.9L615.2 117.4M615.2 117.4L631.7 126.1M631.7 126.1L648.8 135.2M648.8 135.2L666.4 144.6M666.4 144.6L684.7 154.3M684.7 154.3L703.7 164.4M703.7 164.4L723.4 174.9M723.4 174.9L743.8 185.8M743.8 185.8L765.1 197.1M765.1 197.1L787.1 208.8M787.1 208.8L810.1 221.0M810.1 221.0L834.0 233.7M834.0 233.7L858.9 247.0M858.9 247.0L884.9 260.8M884.9 260.8L912.0 275.2M912.0 275.2L940.3 290.3M940.3 290.3L970.0 306.1M970.0 306.1L1001.0 322.6M1001.0 322.6L1033.6 339.9M1033.6 339.9L1067.7 358.0M1067.7 358.0L1103.6 377.1M1103.6 377.1L1141.3 397.2M1141.3 397.2L1181.1 418.3M1181.1 418.3L1223.0 440.7M1223.0 440.7L1267.3 464.2M1267.3 464.2L1314.2 489.1M1314.2 489.1L1363.8 515.6M1363.8 515.6L1416.6 543.6M1420.8 162.0L1402.1 170.6M1402.1 170.6L1382.8 179.5M1382.8 179.5L1362.9 188.6M1362.9 188.6L1342.4 198.0M1342.4 198.0L1321.2 207.7M1321.2 207.7L1299.3 217.8M1299.3 217.8L1276.7 228.2M1276.7 228.2L1253.4 238.9M1253.4 238.9L1229.2 250.0M1229.2 250.0L1204.2 261.5M1204.2 261.5L1178.3 273.4M1178.3 273.4L1151.4 285.7M1151.4 285.7L1123.6 298.5M1123.6 298.5L1094.7 311.8M1094.7 311.8L1064.7 325.6M1064.7 325.6L1033.6 339.9M1033.6 339.9L1001.2 354.8M1001.2 354.8L967.4 370.3M967.4 370.3L932.3 386.4M932.3 386.4L895.7 403.2M895.7 403.2L857.5 420.8M857.5 420.8L817.6 439.1M817.6 439.1L775.9 458.2M775.9 458.2L732.3 478.3M732.3 478.3L686.6 499.3M686.6 499.3L638.7 521.3M638.7 521.3L588.4 544.4M588.4 544.4L535.5 568.7M535.5 568.7L479.9 594.2M479.9 594.2L421.3 621.1M421.3 621.1L359.4 649.6M359.4 649.6L294.0 679.6M294.0 679.6L224.8 711.4M358.9 58.7L369.6 65.6M369.6 65.6L380.6 72.7M380.6 72.7L392.0 80.0M392.0 80.0L403.7 87.5M403.7 87.5L415.8 95.2M415.8 95.2L428.3 103.3M428.3 103.3L441.2 111.5M441.2 111.5L454.5 120.1M454.5 120.1L468.3 128.9M468.3 128.9L482.6 138.1M482.6 138.1L497.4 147.6M497.4 147.6L512.7 157.4M512.7 157.4L528.6 167.6M528.6 167.6L545.1 178.2M545.1 178.2L562.2 189.2M562.2 189.2L580.0 200.6M580.0 200.6L598.4 212.4M598.4 212.4L617.7 224.8M617.7 224.8L637.7 237.7M637.7 237.7L658.6 251.1M658.6 251.1L680.4 265.0M680.4 265.0L703.1 279.6M703.1 279.6L726.9 294.9M726.9 294.9L751.8 310.9M751.8 310.9L777.9 327.6M777.9 327.6L805.2 345.1M805.2 345.1L833.9 363.5M833.9 363.5L864.0 382.9M864.0 382.9L895.7 403.2M895.7 403.2L929.1 424.6M929.1 424.6L964.4 447.3M964.4 447.3L1001.7 471.2M1001.7 471.2L1041.1 496.5M1041.1 496.5L1082.9 523.3M1082.9 523.3L1127.3 551.8M1127.3 551.8L1174.6 582.1M1174.6 582.1L1224.9 614.5M1224.9 614.5L1278.7 649.0M1278.7 649.0L1336.4 686.0M1336.4 686.0L1398.2 725.7M1398.2 725.7L1464.8 768.4M1421.9 283.9L1399.1 296.6M1399.1 296.6L1375.4 309.8M1375.4 309.8L1350.9 323.6M1350.9 323.6L1325.3 337.8M1325.3 337.8L1298.8 352.6M1298.8 352.6L1271.1 368.1M1271.1 368.1L1242.4 384.1M1242.4 384.1L1212.4 400.9M1212.4 400.9L1181.1 418.3M1181.1 418.3L1148.4 436.6M1148.4 436.6L1114.2 455.7M1114.2 455.7L1078.5 475.6M1078.5 475.6L1041.1 496.5M1041.1 496.5L1001.9 518.4M1001.9 518.4L960.7 541.4M960.7 541.4L917.4 565.6M917.4 565.6L871.8 591.0M871.8 591.0L823.8 617.8M823.8 617.8L773.2 646.1M773.2 646.1L719.6 676.0M719.6 676.0L663.0 707.6M663.0 707.6L602.9 741.1M602.9 741.1L539.2 776.7M539.2 776.7L471.3 814.6M471.3 814.6L398.9 855.0M398.9 855.0L321.6 898.2M321.6 898.2L238.9 944.4M281.8 114.2L292.5 122.8M292.5 122.8L303.6 131.8M303.6 131.8L315.0 141.0M315.0 141.0L326.9 150.6M326.9 150.6L339.1 160.5M339.1 160.5L351.9 170.8M351.9 170.8L365.1 181.5M365.1 181.5L378.8 192.6M378.8 192.6L393.1 204.1M393.1 204.1L407.9 216.1M407.9 216.1L423.4 228.6M423.4 228.6L439.5 241.6M439.5 241.6L456.3 255.2M456.3 255.2L473.8 269.3M473.8 269.3L492.0 284.1M492.0 284.1L511.2 299.5M511.2 299.5L531.2 315.7M531.2 315.7L552.1 332.6M552.1 332.6L574.1 350.4M574.1 350.4L597.2 369.0M597.2 369.0L621.4 388.7M621.4 388.7L647.0 409.3M647.0 409.3L673.9 431.0M673.9 431.0L702.3 454.0M702.3 454.0L732.3 478.3M732.3 478.3L764.1 504.0M764.1 504.0L797.8 531.2M797.8 531.2L833.7 560.2M833.7 560.2L871.8 591.0M871.8 591.0L912.5 623.9M912.5 623.9L956.0 659.0M956.0 659.0L1002.6 696.7M1002.6 696.7L1052.7 737.1M1052.7 737.1L1106.6 780.7M1106.6 780.7L1164.8 827.7M1164.8 827.7L1227.8 878.7M1227.8 878.7L1296.4 934.1M1296.4 934.1L1371.2 994.5M1371.2 994.5L1453.1 1060.7M1423.7 473.0L1394.5 493.8M1394.5 493.8L1363.8 515.6M1363.8 515.6L1331.7 538.4M1331.7 538.4L1297.9 562.5M1297.9 562.5L1262.4 587.8M1262.4 587.8L1224.9 614.5M1224.9 614.5L1185.4 642.6M1185.4 642.6L1143.7 672.3M1143.7 672.3L1099.5 703.8M1099.5 703.8L1052.7 737.1M1052.7 737.1L1002.9 772.5M1002.9 772.5L950.0 810.2M950.0 810.2L893.6 850.4M893.6 850.4L833.4 893.3M833.4 893.3L768.9 939.2M768.9 939.2L699.6 988.5M699.6 988.5L625.1 1041.6M278.6 288.6L293.0 304.3M293.0 304.3L308.0 320.6M308.0 320.6L323.7 337.8M323.7 337.8L340.2 355.8M340.2 355.8L357.6 374.7M357.6 374.7L375.8 394.5M375.8 394.5L395.0 415.4M395.0 415.4L415.2 437.5M415.2 437.5L436.6 460.8M436.6 460.8L459.2 485.4M459.2 485.4L483.1 511.5M483.1 511.5L508.5 539.2M508.5 539.2L535.5 568.7M535.5 568.7L564.3 600.0M564.3 600.0L595.0 633.4M595.0 633.4L627.8 669.2M627.8 669.2L663.0 707.6M663.0 707.6L700.8 748.8M700.8 748.8L741.6 793.2M741.6 793.2L785.6 841.2M785.6 841.2L833.4 893.3M833.4 893.3L885.3 949.9M885.3 949.9L942.0 1011.7M942.0 1011.7L1004.2 1079.5M1426.7 805.9L1386.1 845.8M1386.1 845.8L1342.8 888.4M1342.8 888.4L1296.4 934.1M1296.4 934.1L1246.6 983.1M1246.6 983.1L1193.0 1035.8M272.2 643.2L294.0 679.6M294.0 679.6L317.4 718.7M317.4 718.7L342.5 760.7M342.5 760.7L369.6 806.0M369.6 806.0L398.9 855.0M398.9 855.0L430.7 908.2M430.7 908.2L465.4 966.1M465.4 966.1L503.2 1029.4M503.2 1029.4L544.7 1098.8"/><path opacity="0.875" d="M1382.2 56.9L1408.4 63.8"/><path opacity="0.125" d="M796.3 379.4L757.2 395.9M757.2 395.9L716.4 413.1M1001.3 390.0L1037.0 410.7M1071.0 393.6L1037.0 410.7"/><path opacity="0.25" d="M716.4 413.1L673.9 431.0M673.9 431.0L629.4 449.8M629.4 449.8L582.9 469.4M1037.0 410.7L1074.6 432.6M1074.6 432.6L1114.2 455.7M1037.0 410.7L1001.5 428.6M1001.5 428.6L964.4 447.3M757.2 395.9L786.6 416.9M786.6 416.9L817.6 439.1M1298.4 444.8L1267.3 464.2M1267.3 464.2L1234.8 484.6M533.0 423.2L557.3 445.7M557.3 445.7L582.9 469.4M311.7 476.5L331.0 502.0M331.0 502.0L351.6 529.1"/><path opacity="0.375" d="M582.9 469.4L534.2 490.0M534.2 490.0L483.1 511.5M483.1 511.5L429.6 534.1M429.6 534.1L373.3 557.9M373.3 557.9L314.2 582.8M1114.2 455.7L1156.2 480.1M1156.2 480.1L1200.7 505.9M1200.7 505.9L1247.8 533.3M964.4 447.3L925.6 466.8M925.6 466.8L885.0 487.3M817.6 439.1L850.4 462.5M850.4 462.5L885.0 487.3M1234.8 484.6L1200.7 505.9M1200.7 505.9L1164.9 528.3M582.9 469.4L610.0 494.6M351.6 529.1L373.3 557.9"/><path opacity="0.5" d="M314.2 582.8L251.9 609.1M1247.8 533.3L1297.9 562.5M1297.9 562.5L1351.3 593.5M1351.3 593.5L1408.2 626.6M1408.2 626.6L1469.1 662.1M885.0 487.3L842.5 508.7M842.5 508.7L797.8 531.2M885.0 487.3L921.7 513.5M921.7 513.5L960.7 541.4M1164.9 528.3L1127.3 551.8M610.0 494.6L638.7 521.3M638.7 521.3L669.2 549.6M1441.3 599.3L1408.2 626.6M1408.2 626.6L1373.3 655.5M373.3 557.9L396.5 588.5M396.5 588.5L421.3 621.1"/><path opacity="0.625" d="M797.8 531.2L751.0 554.8M751.0 554.8L701.7 579.7M701.7 579.7L649.7 605.9M649.7 605.9L595.0 633.4M595.0 633.4L537.2 662.6M537.2 662.6L476.0 693.4M476.0 693.4L411.3 726.0M411.3 726.0L342.5 760.7M342.5 760.7L269.5 797.5M960.7 541.4L1002.1 571.0M1002.1 571.0L1046.2 602.6M1046.2 602.6L1093.3 636.3M1093.3 636.3L1143.7 672.3M1143.7 672.3L1197.7 711.0M1197.7 711.0L1255.8 752.5M1255.8 752.5L1318.4 797.3M1318.4 797.3L1386.1 845.8M1386.1 845.8L1459.6 898.3M1127.3 551.8L1087.8 576.6M1087.8 576.6L1046.2 602.6M1046.2 602.6L1002.3 630.0M1002.3 630.0L956.0 659.0M956.0 659.0L907.0 689.7M907.0 689.7L855.1 722.2M855.1 722.2L800.1 756.6M800.1 756.6L741.6 793.2M741.6 793.2L679.2 832.2M679.2 832.2L612.7 873.8M612.7 873.8L541.6 918.4M541.6 918.4L465.4 966.1M465.4 966.1L383.4 1017.4M383.4 1017.4L295.1 1072.6M669.2 549.6L701.7 579.7M701.7 579.7L736.2 611.8M736.2 611.8L773.2 646.1M773.2 646.1L812.7 682.8M812.7 682.8L855.1 722.2M855.1 722.2L900.8 764.5M900.8 764.5L950.0 810.2M950.0 810.2L1003.3 859.7M1003.3 859.7L1061.1 913.4M1061.1 913.4L1124.1 971.8M1124.1 971.8L1193.0 1035.8M1373.3 655.5L1336.4 686.0M1336.4 686.0L1297.3 718.3M1297.3 718.3L1255.8 752.5M1255.8 752.5L1211.7 789.0M1211.7 789.0L1164.8 827.7M1164.8 827.7L1114.7 869.1M1114.7 869.1L1061.1 913.4M1061.1 913.4L1003.7 960.8M1003.7 960.8L942.0 1011.7M942.0 1011.7L875.6 1066.6M421.3 621.1L447.7 656.0M447.7 656.0L476.0 693.4M476.0 693.4L506.4 733.5M506.4 733.5L539.2 776.7M539.2 776.7L574.5 823.3M574.5 823.3L612.7 873.8M612.7 873.8L654.3 928.7M654.3 928.7L699.6 988.5M699.6 988.5L749.2 1054.0M265.7 1005.6L295.1 1072.6"/></g>
<polygon points="383.8,399.7 884.2,222.3 1424.1,492.8 1365.0,638.1 852.7,1051.8 427.2,539.4" fill="#6fc3aa"/>
<g stroke="#87b5a4" stroke-width="1" fill="none" opacity="0.6"><path opacity="0.12" d="M320.8 57.6L292.3 63.3M292.3 63.3L263.2 69.1M500.9 56.6L474.7 62.2M474.7 62.2L447.8 68.0M447.8 68.0L420.3 73.9M420.3 73.9L392.0 80.0M392.0 80.0L363.0 86.2M363.0 86.2L333.3 92.6M333.3 92.6L302.8 99.1M302.8 99.1L271.5 105.8M1300.0 54.6L1324.9 61.4M1324.9 61.4L1350.5 68.4M1350.5 68.4L1376.9 75.6M1376.9 75.6L1404.2 83.1M1404.2 83.1L1432.3 90.7M680.8 55.5L656.8 61.1M656.8 61.1L632.2 66.9M632.2 66.9L606.9 72.8M606.9 72.8L581.0 78.8M581.0 78.8L554.5 85.0M554.5 85.0L527.3 91.4M527.3 91.4L499.3 97.9M499.3 97.9L470.6 104.6M470.6 104.6L441.2 111.5M441.2 111.5L410.9 118.6M410.9 118.6L379.8 125.9M379.8 125.9L347.9 133.3M347.9 133.3L315.0 141.0M315.0 141.0L281.2 148.9M1160.5 56.8L1183.4 63.7M1183.4 63.7L1206.9 70.7M1206.9 70.7L1231.2 78.0M1231.2 78.0L1256.3 85.5M1256.3 85.5L1282.1 93.2M1282.1 93.2L1308.8 101.3M1308.8 101.3L1336.4 109.5M1336.4 109.5L1364.9 118.1M1364.9 118.1L1394.5 126.9M1394.5 126.9L1425.0 136.1M860.4 54.5L838.6 60.1M838.6 60.1L816.2 65.8M816.2 65.8L793.3 71.7M793.3 71.7L769.8 77.7M769.8 77.7L745.6 83.9M745.6 83.9L720.9 90.3M720.9 90.3L695.5 96.8M695.5 96.8L669.5 103.4M669.5 103.4L642.7 110.3M642.7 110.3L615.2 117.4M615.2 117.4L587.0 124.6M587.0 124.6L558.0 132.1M558.0 132.1L528.1 139.7M528.1 139.7L497.4 147.6M497.4 147.6L465.8 155.7M465.8 155.7L433.2 164.1M433.2 164.1L399.7 172.7M399.7 172.7L365.1 181.5M365.1 181.5L329.5 190.7M329.5 190.7L292.7 200.1M292.7 200.1L254.8 209.8M1020.1 59.0L1040.9 65.9M1040.9 65.9L1062.3 73.0M1062.3 73.0L1084.4 80.4M1084.4 80.4L1107.2 87.9M1107.2 87.9L1130.8 95.8M1130.8 95.8L1155.1 103.8M1155.1 103.8L1180.2 112.2M1180.2 112.2L1206.2 120.8M1206.2 120.8L1233.1 129.7M1233.1 129.7L1260.9 139.0M1260.9 139.0L1289.8 148.6M1289.8 148.6L1319.6 158.5M1319.6 158.5L1350.6 168.8M1350.6 168.8L1382.8 179.5M1382.8 179.5L1416.2 190.5M1020.1 59.0L999.9 64.7M999.9 64.7L979.3 70.6M979.3 70.6L958.2 76.6M958.2 76.6L936.5 82.8M936.5 82.8L914.2 89.1M914.2 89.1L891.4 95.6M891.4 95.6L868.0 102.3M868.0 102.3L843.9 109.1M843.9 109.1L819.2 116.1M819.2 116.1L793.8 123.3M793.8 123.3L767.7 130.8M767.7 130.8L740.8 138.4M740.8 138.4L713.2 146.3M713.2 146.3L684.7 154.3M684.7 154.3L655.5 162.7M655.5 162.7L625.3 171.2M625.3 171.2L594.2 180.1M594.2 180.1L562.2 189.2M562.2 189.2L529.1 198.6M529.1 198.6L495.0 208.3M495.0 208.3L459.8 218.3M459.8 218.3L423.4 228.6M423.4 228.6L385.8 239.3M385.8 239.3L346.9 250.4M346.9 250.4L306.6 261.8M306.6 261.8L264.9 273.7M860.4 54.5L878.6 61.2M878.6 61.2L897.3 68.2M897.3 68.2L916.6 75.4M916.6 75.4L936.5 82.8M936.5 82.8L957.0 90.4M957.0 90.4L978.2 98.3M978.2 98.3L1000.1 106.5M1000.1 106.5L1022.8 114.9M1022.8 114.9L1046.2 123.6M1046.2 123.6L1070.4 132.6M1070.4 132.6L1095.5 141.9M1095.5 141.9L1121.4 151.6M1121.4 151.6L1148.4 161.6M1148.4 161.6L1176.3 172.0M1176.3 172.0L1205.3 182.8M1205.3 182.8L1235.4 194.0M1235.4 194.0L1266.8 205.7M1266.8 205.7L1299.3 217.8M1299.3 217.8L1333.3 230.4M1333.3 230.4L1368.6 243.6M1368.6 243.6L1405.5 257.3M1405.5 257.3L1443.9 271.6M1201.3 58.0L1183.4 63.7M1183.4 63.7L1165.1 69.5M1165.1 69.5L1146.3 75.5M1146.3 75.5L1127.0 81.6M1127.0 81.6L1107.2 87.9M1107.2 87.9L1086.9 94.4M1086.9 94.4L1066.1 101.1M1066.1 101.1L1044.7 107.9M1044.7 107.9L1022.8 114.9M1022.8 114.9L1000.2 122.1M1000.2 122.1L977.0 129.5M977.0 129.5L953.1 137.1M953.1 137.1L928.6 144.9M928.6 144.9L903.3 153.0M903.3 153.0L877.3 161.3M877.3 161.3L850.5 169.8M850.5 169.8L822.9 178.6M822.9 178.6L794.4 187.7M794.4 187.7L765.1 197.1M765.1 197.1L734.7 206.7M734.7 206.7L703.5 216.7M703.5 216.7L671.1 227.0M671.1 227.0L637.7 237.7M637.7 237.7L603.2 248.7M603.2 248.7L567.4 260.1M567.4 260.1L530.4 271.9M530.4 271.9L492.0 284.1M492.0 284.1L452.3 296.8M452.3 296.8L411.0 309.9M411.0 309.9L368.2 323.6M368.2 323.6L323.7 337.8M323.7 337.8L277.5 352.5M719.9 56.6L736.0 63.5M736.0 63.5L752.6 70.5M752.6 70.5L769.8 77.7M769.8 77.7L787.4 85.2M787.4 85.2L805.6 92.9M805.6 92.9L824.5 100.9M824.5 100.9L843.9 109.1M843.9 109.1L864.0 117.6M864.0 117.6L884.8 126.4M884.8 126.4L906.3 135.5M906.3 135.5L928.6 144.9M928.6 144.9L951.7 154.7M951.7 154.7L975.6 164.8M975.6 164.8L1000.4 175.3M1000.4 175.3L1026.2 186.2M1026.2 186.2L1053.0 197.5M1053.0 197.5L1080.8 209.3M1080.8 209.3L1109.8 221.6M1109.8 221.6L1139.9 234.3M1139.9 234.3L1171.4 247.6M1171.4 247.6L1204.2 261.5M1204.2 261.5L1238.4 276.0M1238.4 276.0L1274.2 291.1M1274.2 291.1L1311.7 307.0M1311.7 307.0L1350.9 323.6M1350.9 323.6L1392.0 340.9M1392.0 340.9L1435.1 359.2M1382.2 56.9L1366.5 62.6M1366.5 62.6L1350.5 68.4M1350.5 68.4L1334.0 74.4M1334.0 74.4L1317.2 80.5M1317.2 80.5L1299.9 86.8M1299.9 86.8L1282.1 93.2M1282.1 93.2L1263.9 99.9M1263.9 99.9L1245.2 106.7M1245.2 106.7L1226.0 113.6M1226.0 113.6L1206.2 120.8M1206.2 120.8L1185.9 128.2M1185.9 128.2L1165.0 135.8M1165.0 135.8L1143.6 143.6M1143.6 143.6L1121.4 151.6M1121.4 151.6L1098.7 159.9M1098.7 159.9L1075.2 168.4M1075.2 168.4L1051.1 177.2M1051.1 177.2L1026.2 186.2M1026.2 186.2L1000.5 195.5M1000.5 195.5L974.0 205.2M974.0 205.2L946.6 215.1M946.6 215.1L918.3 225.4M918.3 225.4L889.1 236.0M889.1 236.0L858.9 247.0M858.9 247.0L827.6 258.3M827.6 258.3L795.2 270.1M795.2 270.1L761.7 282.3M761.7 282.3L726.9 294.9M726.9 294.9L690.9 308.0M690.9 308.0L653.4 321.6M653.4 321.6L614.5 335.7M614.5 335.7L574.1 350.4M574.1 350.4L532.0 365.7M532.0 365.7L488.2 381.6M488.2 381.6L442.6 398.2M442.6 398.2L395.0 415.4M395.0 415.4L345.3 433.5M345.3 433.5L293.4 452.3M293.4 452.3L239.1 472.1M578.4 58.8L592.5 65.7M592.5 65.7L606.9 72.8M606.9 72.8L621.8 80.1M621.8 80.1L637.2 87.6M637.2 87.6L653.1 95.4M653.1 95.4L669.5 103.4M669.5 103.4L686.4 111.7M686.4 111.7L703.9 120.3M703.9 120.3L722.1 129.2M722.1 129.2L740.8 138.4M740.8 138.4L760.2 147.9M760.2 147.9L780.4 157.8M780.4 157.8L801.2 168.0M801.2 168.0L822.9 178.6M822.9 178.6L845.4 189.6M845.4 189.6L868.7 201.1M868.7 201.1L893.0 213.0M893.0 213.0L918.3 225.4M918.3 225.4L944.7 238.3M944.7 238.3L972.1 251.7M972.1 251.7L1000.8 265.8M1000.8 265.8L1030.7 280.4M1030.7 280.4L1062.0 295.8M1062.0 295.8L1094.7 311.8M1094.7 311.8L1129.0 328.6M1129.0 328.6L1165.0 346.2M1165.0 346.2L1202.7 364.7M1202.7 364.7L1242.4 384.1M1242.4 384.1L1284.1 404.6M1284.1 404.6L1328.1 426.1M1328.1 426.1L1374.6 448.9M1374.6 448.9L1423.7 473.0M1411.9 119.6L1394.5 126.9M1394.5 126.9L1376.5 134.5M1376.5 134.5L1358.1 142.2M1358.1 142.2L1339.2 150.2M1339.2 150.2L1319.6 158.5M1319.6 158.5L1299.5 167.0M1299.5 167.0L1278.8 175.7M1278.8 175.7L1257.5 184.7M1257.5 184.7L1235.4 194.0M1235.4 194.0L1212.7 203.6M1212.7 203.6L1189.2 213.5M1189.2 213.5L1165.0 223.8M1165.0 223.8L1139.9 234.3M1139.9 234.3L1114.0 245.3M1114.0 245.3L1087.2 256.6M1087.2 256.6L1059.5 268.3M1059.5 268.3L1030.7 280.4M1030.7 280.4L1000.9 293.0M1000.9 293.0L970.0 306.1M970.0 306.1L937.9 319.6M937.9 319.6L904.6 333.7M904.6 333.7L869.9 348.3M869.9 348.3L833.9 363.5M833.9 363.5L796.3 379.4M424.3 54.3L435.9 61.0M435.9 61.0L447.8 68.0M447.8 68.0L460.1 75.1M460.1 75.1L472.8 82.5M472.8 82.5L485.8 90.1M485.8 90.1L499.3 97.9M499.3 97.9L513.3 106.0M513.3 106.0L527.7 114.4M527.7 114.4L542.6 123.1M542.6 123.1L558.0 132.1M558.0 132.1L573.9 141.3M573.9 141.3L590.4 150.9M590.4 150.9L607.6 160.9M607.6 160.9L625.3 171.2M625.3 171.2L643.7 181.9M643.7 181.9L662.9 193.1M662.9 193.1L682.8 204.7M682.8 204.7L703.5 216.7M703.5 216.7L725.0 229.2M725.0 229.2L747.4 242.3M747.4 242.3L770.8 255.9M770.8 255.9L795.2 270.1M795.2 270.1L820.7 284.9M820.7 284.9L847.4 300.4M847.4 300.4L875.3 316.7M875.3 316.7L904.6 333.7M904.6 333.7L935.2 351.5M935.2 351.5L967.4 370.3M967.4 370.3L1001.3 390.0M1411.1 222.1L1390.2 232.7M1390.2 232.7L1368.6 243.6M1368.6 243.6L1346.2 254.8M1346.2 254.8L1323.1 266.5M1323.1 266.5L1299.1 278.6M1299.1 278.6L1274.2 291.1M1274.2 291.1L1248.4 304.1M1248.4 304.1L1221.7 317.6M1221.7 317.6L1193.9 331.6M1193.9 331.6L1165.0 346.2M1165.0 346.2L1134.9 361.4M1134.9 361.4L1103.6 377.1M1103.6 377.1L1071.0 393.6M282.8 56.5L292.3 63.3M292.3 63.3L302.1 70.3M302.1 70.3L312.2 77.5M312.2 77.5L322.6 84.9M322.6 84.9L333.3 92.6M333.3 92.6L344.4 100.5M344.4 100.5L355.8 108.7M355.8 108.7L367.6 117.1M367.6 117.1L379.8 125.9M379.8 125.9L392.5 134.9M392.5 134.9L405.6 144.3M405.6 144.3L419.1 154.0M419.1 154.0L433.2 164.1M433.2 164.1L447.8 174.5M447.8 174.5L462.9 185.3M462.9 185.3L478.7 196.6M478.7 196.6L495.0 208.3M495.0 208.3L512.0 220.4M512.0 220.4L529.7 233.1M529.7 233.1L548.2 246.3M548.2 246.3L567.4 260.1M567.4 260.1L587.5 274.4M587.5 274.4L608.5 289.5M608.5 289.5L630.4 305.2M630.4 305.2L653.4 321.6M653.4 321.6L677.5 338.8M677.5 338.8L702.8 356.9M702.8 356.9L729.3 375.9M729.3 375.9L757.2 395.9M1410.0 374.9L1383.9 391.3M1383.9 391.3L1356.6 408.3M1356.6 408.3L1328.1 426.1M1328.1 426.1L1298.4 444.8M280.5 188.7L292.7 200.1M292.7 200.1L305.4 211.9M305.4 211.9L318.7 224.2M318.7 224.2L332.5 237.0M332.5 237.0L346.9 250.4M346.9 250.4L361.9 264.3M361.9 264.3L377.5 278.8M377.5 278.8L393.9 294.0M393.9 294.0L411.0 309.9M411.0 309.9L429.0 326.6M429.0 326.6L447.8 344.0M447.8 344.0L467.5 362.3M467.5 362.3L488.2 381.6M488.2 381.6L510.0 401.8M510.0 401.8L533.0 423.2M276.1 429.5L293.4 452.3M293.4 452.3L311.7 476.5"/><path opacity="1.0" d="M397.3 59.9L369.6 65.6M369.6 65.6L341.3 71.5M341.3 71.5L312.2 77.5M312.2 77.5L282.4 83.6M1408.4 63.8L1435.5 70.8M578.4 58.8L553.0 64.5M553.0 64.5L526.9 70.4M526.9 70.4L500.2 76.4M500.2 76.4L472.8 82.5M472.8 82.5L444.6 88.8M444.6 88.8L415.8 95.2M415.8 95.2L386.2 101.9M386.2 101.9L355.8 108.7M355.8 108.7L324.6 115.7M324.6 115.7L292.5 122.8M292.5 122.8L259.5 130.2M1242.2 59.1L1266.5 66.0M1266.5 66.0L1291.4 73.2M1291.4 73.2L1317.2 80.5M1317.2 80.5L1343.7 88.1M1343.7 88.1L1371.2 95.9M1371.2 95.9L1399.5 104.0M1399.5 104.0L1428.8 112.4M759.3 57.8L736.0 63.5M736.0 63.5L712.2 69.3M712.2 69.3L687.9 75.2M687.9 75.2L662.9 81.4M662.9 81.4L637.2 87.6M637.2 87.6L610.9 94.1M610.9 94.1L583.9 100.7M583.9 100.7L556.1 107.5M556.1 107.5L527.7 114.4M527.7 114.4L498.4 121.6M498.4 121.6L468.3 128.9M468.3 128.9L437.4 136.5M437.4 136.5L405.6 144.3M405.6 144.3L372.8 152.3M372.8 152.3L339.1 160.5M339.1 160.5L304.4 169.0M304.4 169.0L268.7 177.8M1079.8 54.6L1101.3 61.3M1101.3 61.3L1123.4 68.3M1123.4 68.3L1146.3 75.5M1146.3 75.5L1169.8 82.9M1169.8 82.9L1194.1 90.6M1194.1 90.6L1219.2 98.5M1219.2 98.5L1245.2 106.7M1245.2 106.7L1272.0 115.1M1272.0 115.1L1299.7 123.8M1299.7 123.8L1328.4 132.9M1328.4 132.9L1358.1 142.2M1358.1 142.2L1388.9 151.9M1388.9 151.9L1420.8 162.0M939.8 56.7L918.8 62.4M918.8 62.4L897.3 68.2M897.3 68.2L875.2 74.1M875.2 74.1L852.6 80.2M852.6 80.2L829.4 86.5M829.4 86.5L805.6 92.9M805.6 92.9L781.2 99.5M781.2 99.5L756.1 106.3M756.1 106.3L730.4 113.2M730.4 113.2L703.9 120.3M703.9 120.3L676.7 127.7M676.7 127.7L648.8 135.2M648.8 135.2L620.0 143.0M620.0 143.0L590.4 150.9M590.4 150.9L560.0 159.2M560.0 159.2L528.6 167.6M528.6 167.6L496.3 176.3M496.3 176.3L462.9 185.3M462.9 185.3L428.6 194.6M428.6 194.6L393.1 204.1M393.1 204.1L356.5 214.0M356.5 214.0L318.7 224.2M318.7 224.2L279.6 234.8M939.8 56.7L959.3 63.6M959.3 63.6L979.3 70.6M979.3 70.6L1000.0 77.9M1000.0 77.9L1021.3 85.3M1021.3 85.3L1043.4 93.1M1043.4 93.1L1066.1 101.1M1066.1 101.1L1089.6 109.3M1089.6 109.3L1113.9 117.8M1113.9 117.8L1139.0 126.6M1139.0 126.6L1165.0 135.8M1165.0 135.8L1192.0 145.2M1192.0 145.2L1219.9 155.0M1219.9 155.0L1248.8 165.2M1248.8 165.2L1278.8 175.7M1278.8 175.7L1310.0 186.6M1310.0 186.6L1342.4 198.0M1342.4 198.0L1376.1 209.8M1376.1 209.8L1411.1 222.1M1120.0 55.7L1101.3 61.3M1101.3 61.3L1082.0 67.1M1082.0 67.1L1062.3 73.0M1062.3 73.0L1042.1 79.1M1042.1 79.1L1021.3 85.3M1021.3 85.3L1000.1 91.7M1000.1 91.7L978.2 98.3M978.2 98.3L955.8 105.0M955.8 105.0L932.8 112.0M932.8 112.0L909.1 119.1M909.1 119.1L884.8 126.4M884.8 126.4L859.8 133.9M859.8 133.9L834.1 141.6M834.1 141.6L807.6 149.6M807.6 149.6L780.4 157.8M780.4 157.8L752.3 166.2M752.3 166.2L723.4 174.9M723.4 174.9L693.6 183.8M693.6 183.8L662.9 193.1M662.9 193.1L631.2 202.6M631.2 202.6L598.4 212.4M598.4 212.4L564.7 222.6M564.7 222.6L529.7 233.1M529.7 233.1L493.6 244.0M493.6 244.0L456.3 255.2M456.3 255.2L417.6 266.8M417.6 266.8L377.5 278.8M377.5 278.8L336.0 291.3M336.0 291.3L293.0 304.3M293.0 304.3L248.3 317.7M798.8 58.9L816.2 65.8M816.2 65.8L834.1 72.9M834.1 72.9L852.6 80.2M852.6 80.2L871.7 87.8M871.7 87.8L891.4 95.6M891.4 95.6L911.7 103.6M911.7 103.6L932.8 112.0M932.8 112.0L954.5 120.6M954.5 120.6L977.0 129.5M977.0 129.5L1000.3 138.7M1000.3 138.7L1024.4 148.2M1024.4 148.2L1049.3 158.1M1049.3 158.1L1075.2 168.4M1075.2 168.4L1102.1 179.0M1102.1 179.0L1130.0 190.1M1130.0 190.1L1159.1 201.6M1159.1 201.6L1189.2 213.5M1189.2 213.5L1220.6 226.0M1220.6 226.0L1253.4 238.9M1253.4 238.9L1287.5 252.4M1287.5 252.4L1323.1 266.5M1323.1 266.5L1360.2 281.2M1360.2 281.2L1399.1 296.6M1399.1 296.6L1439.8 312.7M1300.0 54.6L1283.4 60.3M1283.4 60.3L1266.5 66.0M1266.5 66.0L1249.1 71.9M1249.1 71.9L1231.2 78.0M1231.2 78.0L1212.9 84.2M1212.9 84.2L1194.1 90.6M1194.1 90.6L1174.9 97.1M1174.9 97.1L1155.1 103.8M1155.1 103.8L1134.8 110.7M1134.8 110.7L1113.9 117.8M1113.9 117.8L1092.4 125.1M1092.4 125.1L1070.4 132.6M1070.4 132.6L1047.7 140.3M1047.7 140.3L1024.4 148.2M1024.4 148.2L1000.3 156.4M1000.3 156.4L975.6 164.8M975.6 164.8L950.1 173.5M950.1 173.5L923.8 182.4M923.8 182.4L896.7 191.6M896.7 191.6L868.7 201.1M868.7 201.1L839.9 210.9M839.9 210.9L810.1 221.0M810.1 221.0L779.3 231.5M779.3 231.5L747.4 242.3M747.4 242.3L714.5 253.5M714.5 253.5L680.4 265.0M680.4 265.0L645.1 277.0M645.1 277.0L608.5 289.5M608.5 289.5L570.5 302.3M570.5 302.3L531.2 315.7M531.2 315.7L490.3 329.6M490.3 329.6L447.8 344.0M447.8 344.0L403.6 359.0M403.6 359.0L357.6 374.7M357.6 374.7L309.7 390.9M309.7 390.9L259.7 407.9M641.9 54.4L656.8 61.1M656.8 61.1L672.1 68.1M672.1 68.1L687.9 75.2M687.9 75.2L704.1 82.6M704.1 82.6L720.9 90.3M720.9 90.3L738.2 98.1M738.2 98.1L756.1 106.3M756.1 106.3L774.6 114.7M774.6 114.7L793.8 123.3M793.8 123.3L813.6 132.3M813.6 132.3L834.1 141.6M834.1 141.6L855.3 151.3M855.3 151.3L877.3 161.3M877.3 161.3L900.1 171.6M900.1 171.6L923.8 182.4M923.8 182.4L948.4 193.6M948.4 193.6L974.0 205.2M974.0 205.2L1000.6 217.2M1000.6 217.2L1028.3 229.8M1028.3 229.8L1057.1 242.9M1057.1 242.9L1087.2 256.6M1087.2 256.6L1118.6 270.8M1118.6 270.8L1151.4 285.7M1151.4 285.7L1185.7 301.3M1185.7 301.3L1221.7 317.6M1221.7 317.6L1259.3 334.7M1259.3 334.7L1298.8 352.6M1298.8 352.6L1340.3 371.5M1340.3 371.5L1383.9 391.3M1383.9 391.3L1429.8 412.1M1420.0 76.9L1404.2 83.1M1404.2 83.1L1387.9 89.4M1387.9 89.4L1371.2 95.9M1371.2 95.9L1354.0 102.6M1354.0 102.6L1336.4 109.5M1336.4 109.5L1318.3 116.6M1318.3 116.6L1299.7 123.8M1299.7 123.8L1280.6 131.3M1280.6 131.3L1260.9 139.0M1260.9 139.0L1240.7 146.9M1240.7 146.9L1219.9 155.0M1219.9 155.0L1198.4 163.4M1198.4 163.4L1176.3 172.0M1176.3 172.0L1153.5 180.9M1153.5 180.9L1130.0 190.1M1130.0 190.1L1105.8 199.5M1105.8 199.5L1080.8 209.3M1080.8 209.3L1055.0 219.4M1055.0 219.4L1028.3 229.8M1028.3 229.8L1000.7 240.6M1000.7 240.6L972.1 251.7M972.1 251.7L942.6 263.3M942.6 263.3L912.0 275.2M912.0 275.2L880.3 287.6M880.3 287.6L847.4 300.4M847.4 300.4L813.3 313.7M813.3 313.7L777.9 327.6M777.9 327.6L741.0 341.9M741.0 341.9L702.8 356.9M702.8 356.9L662.9 372.5M662.9 372.5L621.4 388.7M621.4 388.7L578.2 405.5M578.2 405.5L533.0 423.2M533.0 423.2L485.9 441.6M485.9 441.6L436.6 460.8M436.6 460.8L385.0 480.9M385.0 480.9L331.0 502.0M331.0 502.0L274.4 524.1M500.9 56.6L513.7 63.4M513.7 63.4L526.9 70.4M526.9 70.4L540.5 77.6M540.5 77.6L554.5 85.0M554.5 85.0L569.0 92.7M569.0 92.7L583.9 100.7M583.9 100.7L599.3 108.9M599.3 108.9L615.2 117.4M615.2 117.4L631.7 126.1M631.7 126.1L648.8 135.2M648.8 135.2L666.4 144.6M666.4 144.6L684.7 154.3M684.7 154.3L703.7 164.4M703.7 164.4L723.4 174.9M723.4 174.9L743.8 185.8M743.8 185.8L765.1 197.1M765.1 197.1L787.1 208.8M787.1 208.8L810.1 221.0M810.1 221.0L834.0 233.7M834.0 233.7L858.9 247.0M858.9 247.0L884.9 260.8M884.9 260.8L912.0 275.2M912.0 275.2L940.3 290.3M940.3 290.3L970.0 306.1M970.0 306.1L1001.0 322.6M1001.0 322.6L1033.6 339.9M1033.6 339.9L1067.7 358.0M1067.7 358.0L1103.6 377.1M1103.6 377.1L1141.3 397.2M1141.3 397.2L1181.1 418.3M1181.1 418.3L1223.0 440.7M1223.0 440.7L1267.3 464.2M1267.3 464.2L1314.2 489.1M1314.2 489.1L1363.8 515.6M1363.8 515.6L1416.6 543.6M1420.8 162.0L1402.1 170.6M1402.1 170.6L1382.8 179.5M1382.8 179.5L1362.9 188.6M1362.9 188.6L1342.4 198.0M1342.4 198.0L1321.2 207.7M1321.2 207.7L1299.3 217.8M1299.3 217.8L1276.7 228.2M1276.7 228.2L1253.4 238.9M1253.4 238.9L1229.2 250.0M1229.2 250.0L1204.2 261.5M1204.2 261.5L1178.3 273.4M1178.3 273.4L1151.4 285.7M1151.4 285.7L1123.6 298.5M1123.6 298.5L1094.7 311.8M1094.7 311.8L1064.7 325.6M1064.7 325.6L1033.6 339.9M1033.6 339.9L1001.2 354.8M1001.2 354.8L967.4 370.3M967.4 370.3L932.3 386.4M932.3 386.4L895.7 403.2M895.7 403.2L857.5 420.8M857.5 420.8L817.6 439.1M817.6 439.1L775.9 458.2M775.9 458.2L732.3 478.3M732.3 478.3L686.6 499.3M686.6 499.3L638.7 521.3M638.7 521.3L588.4 544.4M588.4 544.4L535.5 568.7M535.5 568.7L479.9 594.2M479.9 594.2L421.3 621.1M421.3 621.1L359.4 649.6M359.4 649.6L294.0 679.6M294.0 679.6L224.8 711.4M358.9 58.7L369.6 65.6M369.6 65.6L380.6 72.7M380.6 72.7L392.0 80.0M392.0 80.0L403.7 87.5M403.7 87.5L415.8 95.2M415.8 95.2L428.3 103.3M428.3 103.3L441.2 111.5M441.2 111.5L454.5 120.1M454.5 120.1L468.3 128.9M468.3 128.9L482.6 138.1M482.6 138.1L497.4 147.6M497.4 147.6L512.7 157.4M512.7 157.4L528.6 167.6M528.6 167.6L545.1 178.2M545.1 178.2L562.2 189.2M562.2 189.2L580.0 200.6M580.0 200.6L598.4 212.4M598.4 212.4L617.7 224.8M617.7 224.8L637.7 237.7M637.7 237.7L658.6 251.1M658.6 251.1L680.4 265.0M680.4 265.0L703.1 279.6M703.1 279.6L726.9 294.9M726.9 294.9L751.8 310.9M751.8 310.9L777.9 327.6M777.9 327.6L805.2 345.1M805.2 345.1L833.9 363.5M833.9 363.5L864.0 382.9M864.0 382.9L895.7 403.2M895.7 403.2L929.1 424.6M929.1 424.6L964.4 447.3M964.4 447.3L1001.7 471.2M1001.7 471.2L1041.1 496.5M1041.1 496.5L1082.9 523.3M1082.9 523.3L1127.3 551.8M1127.3 551.8L1174.6 582.1M1174.6 582.1L1224.9 614.5M1224.9 614.5L1278.7 649.0M1278.7 649.0L1336.4 686.0M1336.4 686.0L1398.2 725.7M1398.2 725.7L1464.8 768.4M1421.9 283.9L1399.1 296.6M1399.1 296.6L1375.4 309.8M1375.4 309.8L1350.9 323.6M1350.9 323.6L1325.3 337.8M1325.3 337.8L1298.8 352.6M1298.8 352.6L1271.1 368.1M1271.1 368.1L1242.4 384.1M1242.4 384.1L1212.4 400.9M1212.4 400.9L1181.1 418.3M1181.1 418.3L1148.4 436.6M1148.4 436.6L1114.2 455.7M1114.2 455.7L1078.5 475.6M1078.5 475.6L1041.1 496.5M1041.1 496.5L1001.9 518.4M1001.9 518.4L960.7 541.4M960.7 541.4L917.4 565.6M917.4 565.6L871.8 591.0M871.8 591.0L823.8 617.8M823.8 617.8L773.2 646.1M773.2 646.1L719.6 676.0M719.6 676.0L663.0 707.6M663.0 707.6L602.9 741.1M602.9 741.1L539.2 776.7M539.2 776.7L471.3 814.6M471.3 814.6L398.9 855.0M398.9 855.0L321.6 898.2M321.6 898.2L238.9 944.4M281.8 114.2L292.5 122.8M292.5 122.8L303.6 131.8M303.6 131.8L315.0 141.0M315.0 141.0L326.9 150.6M326.9 150.6L339.1 160.5M339.1 160.5L351.9 170.8M351.9 170.8L365.1 181.5M365.1 181.5L378.8 192.6M378.8 192.6L393.1 204.1M393.1 204.1L407.9 216.1M407.9 216.1L423.4 228.6M423.4 228.6L439.5 241.6M439.5 241.6L456.3 255.2M456.3 255.2L473.8 269.3M473.8 269.3L492.0 284.1M492.0 284.1L511.2 299.5M511.2 299.5L531.2 315.7M531.2 315.7L552.1 332.6M552.1 332.6L574.1 350.4M574.1 350.4L597.2 369.0M597.2 369.0L621.4 388.7M621.4 388.7L647.0 409.3M647.0 409.3L673.9 431.0M673.9 431.0L702.3 454.0M702.3 454.0L732.3 478.3M732.3 478.3L764.1 504.0M764.1 504.0L797.8 531.2M797.8 531.2L833.7 560.2M833.7 560.2L871.8 591.0M871.8 591.0L912.5 623.9M912.5 623.9L956.0 659.0M956.0 659.0L1002.6 696.7M1002.6 696.7L1052.7 737.1M1052.7 737.1L1106.6 780.7M1106.6 780.7L1164.8 827.7M1164.8 827.7L1227.8 878.7M1227.8 878.7L1296.4 934.1M1296.4 934.1L1371.2 994.5M1371.2 994.5L1453.1 1060.7M1423.7 473.0L1394.5 493.8M1394.5 493.8L1363.8 515.6M1363.8 515.6L1331.7 538.4M1331.7 538.4L1297.9 562.5M1297.9 562.5L1262.4 587.8M1262.4 587.8L1224.9 614.5M1224.9 614.5L1185.4 642.6M1185.4 642.6L1143.7 672.3M1143.7 672.3L1099.5 703.8M1099.5 703.8L1052.7 737.1M1052.7 737.1L1002.9 772.5M1002.9 772.5L950.0 810.2M950.0 810.2L893.6 850.4M893.6 850.4L833.4 893.3M833.4 893.3L768.9 939.2M768.9 939.2L699.6 988.5M699.6 988.5L625.1 1041.6M278.6 288.6L293.0 304.3M293.0 304.3L308.0 320.6M308.0 320.6L323.7 337.8M323.7 337.8L340.2 355.8M340.2 355.8L357.6 374.7M357.6 374.7L375.8 394.5M375.8 394.5L395.0 415.4M395.0 415.4L415.2 437.5M415.2 437.5L436.6 460.8M436.6 460.8L459.2 485.4M459.2 485.4L483.1 511.5M483.1 511.5L508.5 539.2M508.5 539.2L535.5 568.7M535.5 568.7L564.3 600.0M564.3 600.0L595.0 633.4M595.0 633.4L627.8 669.2M627.8 669.2L663.0 707.6M663.0 707.6L700.8 748.8M700.8 748.8L741.6 793.2M741.6 793.2L785.6 841.2M785.6 841.2L833.4 893.3M833.4 893.3L885.3 949.9M885.3 949.9L942.0 1011.7M942.0 1011.7L1004.2 1079.5M1426.7 805.9L1386.1 845.8M1386.1 845.8L1342.8 888.4M1342.8 888.4L1296.4 934.1M1296.4 934.1L1246.6 983.1M1246.6 983.1L1193.0 1035.8M272.2 643.2L294.0 679.6M294.0 679.6L317.4 718.7M317.4 718.7L342.5 760.7M342.5 760.7L369.6 806.0M369.6 806.0L398.9 855.0M398.9 855.0L430.7 908.2M430.7 908.2L465.4 966.1M465.4 966.1L503.2 1029.4M503.2 1029.4L544.7 1098.8"/><path opacity="0.875" d="M1382.2 56.9L1408.4 63.8"/><path opacity="0.125" d="M796.3 379.4L757.2 395.9M757.2 395.9L716.4 413.1M1001.3 390.0L1037.0 410.7M1071.0 393.6L1037.0 410.7"/><path opacity="0.25" d="M716.4 413.1L673.9 431.0M673.9 431.0L629.4 449.8M629.4 449.8L582.9 469.4M1037.0 410.7L1074.6 432.6M1074.6 432.6L1114.2 455.7M1037.0 410.7L1001.5 428.6M1001.5 428.6L964.4 447.3M757.2 395.9L786.6 416.9M786.6 416.9L817.6 439.1M1298.4 444.8L1267.3 464.2M1267.3 464.2L1234.8 484.6M533.0 423.2L557.3 445.7M557.3 445.7L582.9 469.4M311.7 476.5L331.0 502.0M331.0 502.0L351.6 529.1"/><path opacity="0.375" d="M582.9 469.4L534.2 490.0M534.2 490.0L483.1 511.5M483.1 511.5L429.6 534.1M429.6 534.1L373.3 557.9M373.3 557.9L314.2 582.8M1114.2 455.7L1156.2 480.1M1156.2 480.1L1200.7 505.9M1200.7 505.9L1247.8 533.3M964.4 447.3L925.6 466.8M925.6 466.8L885.0 487.3M817.6 439.1L850.4 462.5M850.4 462.5L885.0 487.3M1234.8 484.6L1200.7 505.9M1200.7 505.9L1164.9 528.3M582.9 469.4L610.0 494.6M351.6 529.1L373.3 557.9"/><path opacity="0.5" d="M314.2 582.8L251.9 609.1M1247.8 533.3L1297.9 562.5M1297.9 562.5L1351.3 593.5M1351.3 593.5L1408.2 626.6M1408.2 626.6L1469.1 662.1M885.0 487.3L842.5 508.7M842.5 508.7L797.8 531.2M885.0 487.3L921.7 513.5M921.7 513.5L960.7 541.4M1164.9 528.3L1127.3 551.8M610.0 494.6L638.7 521.3M638.7 521.3L669.2 549.6M1441.3 599.3L1408.2 626.6M1408.2 626.6L1373.3 655.5M373.3 557.9L396.5 588.5M396.5 588.5L421.3 621.1"/><path opacity="0.625" d="M797.8 531.2L751.0 554.8M751.0 554.8L701.7 579.7M701.7 579.7L649.7 605.9M649.7 605.9L595.0 633.4M595.0 633.4L537.2 662.6M537.2 662.6L476.0 693.4M476.0 693.4L411.3 726.0M411.3 726.0L342.5 760.7M342.5 760.7L269.5 797.5M960.7 541.4L1002.1 571.0M1002.1 571.0L1046.2 602.6M1046.2 602.6L1093.3 636.3M1093.3 636.3L1143.7 672.3M1143.7 672.3L1197.7 711.0M1197.7 711.0L1255.8 752.5M1255.8 752.5L1318.4 797.3M1318.4 797.3L1386.1 845.8M1386.1 845.8L1459.6 898.3M1127.3 551.8L1087.8 576.6M1087.8 576.6L1046.2 602.6M1046.2 602.6L1002.3 630.0M1002.3 630.0L956.0 659.0M956.0 659.0L907.0 689.7M907.0 689.7L855.1 722.2M855.1 722.2L800.1 756.6M800.1 756.6L741.6 793.2M741.6 793.2L679.2 832.2M679.2 832.2L612.7 873.8M612.7 873.8L541.6 918.4M541.6 918.4L465.4 966.1M465.4 966.1L383.4 1017.4M383.4 1017.4L295.1 1072.6M669.2 549.6L701.7 579.7M701.7 579.7L736.2 611.8M736.2 611.8L773.2 646.1M773.2 646.1L812.7 682.8M812.7 682.8L855.1 722.2M855.1 722.2L900.8 764.5M900.8 764.5L950.0 810.2M950.0 810.2L1003.3 859.7M1003.3 859.7L1061.1 913.4M1061.1 913.4L1124.1 971.8M1124.1 971.8L1193.0 1035.8M1373.3 655.5L1336.4 686.0M1336.4 686.0L1297.3 718.3M1297.3 718.3L1255.8 752.5M1255.8 752.5L1211.7 789.0M1211.7 789.0L1164.8 827.7M1164.8 827.7L1114.7 869.1M1114.7 869.1L1061.1 913.4M1061.1 913.4L1003.7 960.8M1003.7 960.8L942.0 1011.7M942.0 1011.7L875.6 1066.6M421.3 621.1L447.7 656.0M447.7 656.0L476.0 693.4M476.0 693.4L506.4 733.5M506.4 733.5L539.2 776.7M539.2 776.7L574.5 823.3M574.5 823.3L612.7 873.8M612.7 873.8L654.3 928.7M654.3 928.7L699.6 988.5M699.6 988.5L749.2 1054.0M265.7 1005.6L295.1 1072.6"/></g>
<!--ISLAND-->
<path d="M656.6,599 L661,585.5 L681.5,554 L709,530 L744,509 L778.5,499 L812,494 L830,481 L866,471 L912,475 L960,497 L1000,518 L1040,546 L1075,575 L1094,628.6 L1082,661.5 L1058,703 L1027,727 L971.5,762 L909,781 L850,788 L796,769 L744,744.8 L695.4,706.7 L674.6,682 L666,665 Z" fill="url(#isl)"/>
<path d="M668,592 L709,540 L778,505 L866,478 L960,500 L1040,550 L1070,585 L1060,625 L1000,665 L930,700 L860,712 L790,690 L735,650 L690,620 Z" fill="url(#islTop)" filter="url(#blur6)" opacity="0.9"/>
<path d="M699,551 L709,532 L744,511 L778.5,501 L812,496 L830,484 L866,474 L912,478 L960,499 L1000,520 L1040,548 L1050,575 L1040.8,580 L885,459 Z" fill="url(#ground)"/>
<path d="M713,563 L718,576 L722.7,582.7 L745.6,594 L748.9,602.3 L755.4,612 L752.1,622 L752.1,640 L765.2,644.8 L778.3,646.5 L789.7,653 L801.2,662.8 L807.7,672.6 L820.8,677.5 L833.9,684 L850.2,690.6 L860.8,694.4 L892,682 L926.5,668.5 L954,658 L964.6,644 L992,634 L1016.5,620 L1027,606 L1040.8,592 L1050,600 L1060,585 L1040.8,580 L855.6,691 Z" fill="#4a9832" stroke="#3d8a2a" stroke-width="1.5" stroke-linejoin="round"/>

<polygon points="699,551 885,459 1040.8,580 855.6,691" fill="#b4dfbf"/>
<!--TREES-->
<g fill="url(#trunk)" stroke="#4a3818" stroke-width="0.7">
<path d="M778.1,494.6C778.5,493.2 784.1,492.3 786.1,489.2C788.2,486.1 790.2,481.6 790.2,475.7C790.2,469.9 788.2,460.5 786.1,454.2C784.1,447.9 779.0,441.2 778.1,438.1C777.2,434.9 778.7,433.6 780.8,435.4C782.8,437.2 787.5,447.9 790.2,448.8C792.9,449.7 794.9,442.1 796.9,440.8C798.9,439.4 802.7,438.5 802.3,440.8C801.8,443.0 795.1,448.4 794.2,454.2C793.3,460.0 795.8,469.9 796.9,475.7C798.0,481.6 799.1,485.8 800.9,489.2C802.7,492.6 808.3,494.6 807.7,495.9C807.0,497.3 799.8,497.7 796.9,497.3C794.0,496.8 792.4,493.2 790.2,493.2C787.9,493.2 785.5,497.1 783.4,497.3C781.4,497.5 777.6,495.9 778.1,494.6Z"/>
<path d="M753.8,448.8C756.8,449.1 765.5,452.4 770.0,454.2C774.5,456.0 778.7,458.0 780.8,459.6C782.8,461.2 784.1,463.6 782.1,463.6C780.1,463.6 773.6,461.4 768.6,459.6C763.7,457.8 755.0,454.7 752.5,452.9C750.0,451.1 750.9,448.6 753.8,448.8Z"/>
<path d="M834.6,478.4C832.6,477.3 838.2,478.0 838.6,473.1C839.1,468.1 838.2,455.1 837.3,448.8C836.4,442.5 833.2,437.8 833.2,435.4C833.2,432.9 835.7,432.2 837.3,434.0C838.9,435.8 841.1,445.0 842.7,446.1C844.2,447.3 845.6,441.2 846.7,440.8C847.8,440.3 849.8,441.2 849.4,443.4C848.9,445.7 844.7,449.3 844.0,454.2C843.3,459.1 844.2,468.8 845.4,473.1C846.5,477.3 852.5,478.9 850.7,479.8C848.9,480.7 836.6,479.6 834.6,478.4Z"/>
<path d="M868.2,481.1C866.4,480.1 871.6,481.1 872.3,475.7C872.9,470.4 872.7,457.4 872.3,448.8C871.8,440.3 869.1,428.6 869.6,424.6C870.0,420.6 873.4,420.6 875.0,424.6C876.5,428.6 878.3,440.3 879.0,448.8C879.7,457.4 878.3,470.3 879.0,475.7C879.7,481.2 884.8,480.8 883.0,481.7C881.2,482.6 870.0,482.1 868.2,481.1Z"/>
<path d="M924.8,524.2C923.0,523.1 928.1,524.6 928.8,518.8C929.5,513.0 930.1,498.6 928.8,489.2C927.5,479.8 921.4,467.0 920.7,462.3C920.1,457.6 922.7,457.8 924.8,460.9C926.8,464.1 930.8,480.0 932.8,481.1C934.9,482.3 935.5,469.7 936.9,467.7C938.2,465.7 941.1,465.4 940.9,469.0C940.7,472.6 936.2,480.9 935.5,489.2C934.9,497.5 936.2,512.8 936.9,518.8C937.6,524.9 941.6,524.6 939.6,525.5C937.6,526.4 926.6,525.3 924.8,524.2Z"/>
<path d="M984.0,563.2C982.4,561.9 987.6,561.7 988.0,556.5C988.5,551.3 988.5,541.2 986.7,532.3C984.9,523.3 978.2,507.8 977.3,502.7C976.4,497.5 979.0,498.2 981.3,501.3C983.5,504.5 988.7,519.9 990.7,521.5C992.7,523.1 992.3,512.3 993.4,510.7C994.5,509.2 997.4,508.5 997.4,512.1C997.4,515.7 993.9,524.9 993.4,532.3C993.0,539.7 994.1,551.1 994.8,556.5C995.4,561.9 999.2,563.5 997.4,564.6C995.6,565.7 985.6,564.6 984.0,563.2Z"/>
<path d="M1019.0,639.9C1018.1,637.7 1023.2,632.8 1025.7,626.5C1028.2,620.2 1030.6,609.9 1033.8,602.3C1036.9,594.6 1041.9,585.7 1044.5,580.7C1047.2,575.8 1048.4,573.5 1049.9,572.7C1051.5,571.8 1054.4,572.2 1054.0,575.3C1053.5,578.5 1049.9,584.8 1047.2,591.5C1044.5,598.2 1040.5,607.6 1037.8,615.7C1035.1,623.8 1034.2,635.9 1031.1,639.9C1027.9,644.0 1019.9,642.2 1019.0,639.9Z"/>
</g>
<g stroke="#3e3a22" stroke-width="0.9">
<path d="M735.0,421.9C734.5,419.2 735.0,414.7 737.7,411.1C740.4,407.6 745.8,402.6 751.1,400.4C756.5,398.1 764.2,397.0 770.0,397.7C775.8,398.4 781.2,402.2 786.1,404.4C791.1,406.7 796.0,409.1 799.6,411.1C803.2,413.2 806.6,414.3 807.7,416.5C808.8,418.8 809.0,422.6 806.3,424.6C803.6,426.6 796.7,428.2 791.5,428.6C786.4,429.1 779.4,426.6 775.4,427.3C771.3,428.0 770.9,432.2 767.3,432.7C763.7,433.1 758.3,430.9 753.8,430.0C749.3,429.1 743.5,428.6 740.4,427.3C737.2,425.9 735.4,424.6 735.0,421.9Z" fill="url(#leaf)"/>
<path d="M732.3,440.8C731.9,437.8 734.1,433.4 737.7,431.3C741.3,429.3 748.9,428.2 753.8,428.6C758.8,429.1 765.1,431.6 767.3,434.0C769.5,436.5 769.5,441.0 767.3,443.4C765.1,445.9 758.3,447.9 753.8,448.8C749.3,449.7 744.0,450.2 740.4,448.8C736.8,447.5 732.8,443.7 732.3,440.8Z" fill="url(#leafY)"/>
<path d="M732.3,456.9C732.8,455.1 736.8,452.2 740.4,451.5C744.0,450.8 752.0,451.3 753.8,452.9C755.6,454.4 753.8,459.4 751.1,460.9C748.5,462.5 740.8,463.0 737.7,462.3C734.5,461.6 731.9,458.7 732.3,456.9Z" fill="url(#leafY)"/>
<path d="M796.9,403.1C796.9,398.8 803.2,393.6 807.7,391.0C812.2,388.3 818.4,386.7 823.8,386.9C829.2,387.1 835.5,390.1 840.0,392.3C844.5,394.5 848.0,397.2 850.7,400.4C853.4,403.5 856.1,408.0 856.1,411.1C856.1,414.3 854.3,418.1 850.7,419.2C847.2,420.3 839.5,417.9 834.6,417.9C829.7,417.9 825.6,419.4 821.1,419.2C816.6,419.0 811.7,419.2 807.7,416.5C803.6,413.8 796.9,407.3 796.9,403.1Z" fill="url(#leaf)"/>
<path d="M791.5,435.4C790.6,432.2 792.9,426.8 796.9,424.6C800.9,422.4 809.9,421.5 815.7,421.9C821.6,422.4 828.8,424.6 831.9,427.3C835.0,430.0 836.4,435.4 834.6,438.1C832.8,440.8 826.5,442.5 821.1,443.4C815.7,444.3 807.2,444.8 802.3,443.4C797.4,442.1 792.4,438.5 791.5,435.4Z" fill="url(#leaf)"/>
<path d="M826.5,413.8C827.4,410.2 830.1,407.1 834.6,405.8C839.1,404.4 848.0,404.4 853.4,405.8C858.8,407.1 864.2,410.2 866.9,413.8C869.6,417.4 870.9,424.2 869.6,427.3C868.2,430.4 863.8,431.8 858.8,432.7C853.9,433.6 844.9,433.6 840.0,432.7C835.0,431.8 831.4,430.4 829.2,427.3C827.0,424.2 825.6,417.4 826.5,413.8Z" fill="url(#leaf)"/>
<path d="M848.0,395.0C849.8,391.4 855.7,386.7 861.5,384.2C867.3,381.8 875.9,380.2 883.0,380.2C890.2,380.2 899.2,381.8 904.6,384.2C910.0,386.7 912.2,391.9 915.3,395.0C918.5,398.1 923.4,399.9 923.4,403.1C923.4,406.2 919.4,411.1 915.3,413.8C911.3,416.5 904.6,417.9 899.2,419.2C893.8,420.6 888.4,422.4 883.0,421.9C877.7,421.5 872.3,419.2 866.9,416.5C861.5,413.8 853.9,409.3 850.7,405.8C847.6,402.2 846.3,398.6 848.0,395.0Z" fill="url(#leaf)"/>
<path d="M915.3,397.7C914.4,392.8 926.1,397.7 931.5,400.4C936.9,403.1 943.2,409.8 947.6,413.8C952.1,417.9 956.2,421.5 958.4,424.6C960.7,427.7 962.0,430.9 961.1,432.7C960.2,434.5 957.1,435.8 953.0,435.4C949.0,434.9 943.2,436.3 936.9,430.0C930.6,423.7 916.2,402.6 915.3,397.7Z" fill="url(#leaf)"/>
<path d="M893.8,430.0C895.2,426.4 901.0,422.8 904.6,424.6C908.2,426.4 912.2,435.4 915.3,440.8C918.5,446.1 923.0,453.3 923.4,456.9C923.9,460.5 921.2,462.3 918.0,462.3C914.9,462.3 908.2,459.6 904.6,456.9C901.0,454.2 898.3,450.6 896.5,446.1C894.7,441.7 892.5,433.6 893.8,430.0Z" fill="url(#leafY)"/>
<path d="M901.9,411.1C904.6,407.8 908.2,406.7 912.7,407.1C917.1,407.6 923.9,410.0 928.8,413.8C933.7,417.6 938.2,424.6 942.3,430.0C946.3,435.4 950.3,440.8 953.0,446.1C955.7,451.5 958.4,458.7 958.4,462.3C958.4,465.9 956.6,467.7 953.0,467.7C949.4,467.7 942.3,465.0 936.9,462.3C931.5,459.6 926.1,455.6 920.7,451.5C915.3,447.5 908.6,442.1 904.6,438.1C900.5,434.0 896.9,431.8 896.5,427.3C896.1,422.8 899.2,414.5 901.9,411.1Z" fill="url(#leaf)"/>
<path d="M939.6,473.1C940.0,468.1 944.1,465.9 947.6,465.0C951.2,464.1 957.1,464.5 961.1,467.7C965.1,470.8 969.2,478.4 971.9,483.8C974.6,489.2 977.3,495.9 977.3,500.0C977.3,504.0 975.0,507.2 971.9,508.0C968.7,508.9 962.9,507.6 958.4,505.4C953.9,503.1 948.1,500.0 945.0,494.6C941.8,489.2 939.1,478.0 939.6,473.1Z" fill="url(#leaf)"/>
<path d="M961.1,467.7C961.1,463.6 966.0,460.9 969.2,462.3C972.3,463.6 977.3,470.4 979.9,475.7C982.6,481.1 985.3,490.6 985.3,494.6C985.3,498.6 982.6,501.3 979.9,500.0C977.3,498.6 972.3,491.9 969.2,486.5C966.0,481.1 961.1,471.7 961.1,467.7Z" fill="url(#leafY)"/>
<path d="M966.5,451.5C969.2,448.4 977.7,443.4 982.6,443.4C987.6,443.4 992.1,446.6 996.1,451.5C1000.1,456.5 1003.7,465.9 1006.9,473.1C1010.0,480.2 1013.1,488.8 1014.9,494.6C1016.7,500.4 1018.5,505.4 1017.6,508.0C1016.7,510.7 1013.6,512.5 1009.6,510.7C1005.5,508.9 998.8,502.7 993.4,497.3C988.0,491.9 981.7,484.3 977.3,478.4C972.8,472.6 968.3,466.8 966.5,462.3C964.7,457.8 963.8,454.7 966.5,451.5Z" fill="url(#leaf)"/>
<path d="M998.8,521.5C998.8,515.2 1005.5,509.8 1009.6,508.0C1013.6,506.3 1019.0,506.7 1023.0,510.7C1027.1,514.8 1032.0,526.0 1033.8,532.3C1035.6,538.6 1035.6,544.8 1033.8,548.4C1032.0,552.0 1027.1,554.3 1023.0,553.8C1019.0,553.4 1013.6,551.1 1009.6,545.7C1005.5,540.3 998.8,527.8 998.8,521.5Z" fill="url(#leaf)"/>
<path d="M1020.3,510.7C1020.3,505.8 1025.3,496.4 1028.4,494.6C1031.5,492.8 1036.0,495.5 1039.2,500.0C1042.3,504.5 1046.8,516.1 1047.2,521.5C1047.7,526.9 1045.0,531.8 1041.9,532.3C1038.7,532.7 1032.0,527.8 1028.4,524.2C1024.8,520.6 1020.3,515.7 1020.3,510.7Z" fill="url(#leafY)"/>
<path d="M1023.0,500.0C1022.1,494.6 1029.3,487.0 1033.8,483.8C1038.3,480.7 1044.5,478.4 1049.9,481.1C1055.3,483.8 1061.6,492.3 1066.1,500.0C1070.6,507.6 1076.0,520.6 1076.9,526.9C1077.7,533.2 1074.6,537.2 1071.5,537.7C1068.3,538.1 1063.4,533.2 1058.0,529.6C1052.6,526.0 1045.0,521.1 1039.2,516.1C1033.3,511.2 1023.9,505.4 1023.0,500.0Z" fill="url(#leaf)"/>
<path d="M1036.5,548.4C1036.0,541.2 1041.0,535.0 1044.5,532.3C1048.1,529.6 1054.0,528.7 1058.0,532.3C1062.0,535.9 1066.5,544.4 1068.8,553.8C1071.0,563.2 1072.8,582.1 1071.5,588.8C1070.1,595.5 1064.7,596.4 1060.7,594.2C1056.7,591.9 1051.3,583.0 1047.2,575.3C1043.2,567.7 1036.9,555.6 1036.5,548.4Z" fill="url(#leaf)"/>
<path d="M1063.4,537.7C1064.7,534.1 1073.7,538.6 1076.9,543.0C1080.0,547.5 1082.2,559.2 1082.2,564.6C1082.2,570.0 1079.1,575.3 1076.9,575.3C1074.6,575.3 1071.0,570.9 1068.8,564.6C1066.5,558.3 1062.0,541.2 1063.4,537.7Z" fill="url(#leaf)"/>
<path d="M1041.9,607.6C1043.2,601.8 1049.0,592.4 1052.6,591.5C1056.2,590.6 1061.1,597.8 1063.4,602.3C1065.6,606.7 1067.0,613.5 1066.1,618.4C1065.2,623.3 1061.6,630.5 1058.0,631.9C1054.4,633.2 1047.2,630.5 1044.5,626.5C1041.9,622.4 1040.5,613.5 1041.9,607.6Z" fill="url(#leaf)"/>
</g>
<g><ellipse cx="765.1" cy="413.8" rx="16.0" ry="6.3" fill="#f0dc98" opacity="0.4"/><ellipse cx="778.2" cy="425.7" rx="21.8" ry="4.9" fill="#b85a2a" opacity="0.3"/><ellipse cx="747.6" cy="437.0" rx="7.7" ry="3.6" fill="#f0dc98" opacity="0.4"/><ellipse cx="753.9" cy="443.8" rx="10.5" ry="2.8" fill="#b85a2a" opacity="0.3"/><ellipse cx="741.3" cy="455.6" rx="4.7" ry="1.9" fill="#f0dc98" opacity="0.4"/><ellipse cx="745.2" cy="459.3" rx="6.5" ry="1.5" fill="#b85a2a" opacity="0.3"/><ellipse cx="824.2" cy="401.9" rx="13.0" ry="5.8" fill="#f0dc98" opacity="0.4"/><ellipse cx="834.9" cy="412.9" rx="17.8" ry="4.5" fill="#b85a2a" opacity="0.3"/><ellipse cx="810.0" cy="430.9" rx="9.5" ry="3.9" fill="#f0dc98" opacity="0.4"/><ellipse cx="817.7" cy="438.2" rx="12.9" ry="3.0" fill="#b85a2a" opacity="0.3"/><ellipse cx="843.9" cy="416.7" rx="9.5" ry="4.8" fill="#f0dc98" opacity="0.4"/><ellipse cx="851.7" cy="425.8" rx="12.9" ry="3.8" fill="#b85a2a" opacity="0.3"/><ellipse cx="880.4" cy="396.7" rx="16.6" ry="7.5" fill="#f0dc98" opacity="0.4"/><ellipse cx="894.0" cy="410.9" rx="22.6" ry="5.8" fill="#b85a2a" opacity="0.3"/><ellipse cx="939.8" cy="414.7" rx="10.1" ry="6.8" fill="#f0dc98" opacity="0.4"/><ellipse cx="948.0" cy="427.5" rx="13.7" ry="5.3" fill="#b85a2a" opacity="0.3"/><ellipse cx="905.7" cy="440.8" rx="6.5" ry="6.8" fill="#f0dc98" opacity="0.4"/><ellipse cx="911.0" cy="453.7" rx="8.9" ry="5.3" fill="#b85a2a" opacity="0.3"/><ellipse cx="923.1" cy="430.7" rx="13.6" ry="10.9" fill="#f0dc98" opacity="0.4"/><ellipse cx="934.3" cy="451.3" rx="18.6" ry="8.5" fill="#b85a2a" opacity="0.3"/><ellipse cx="956.1" cy="482.0" rx="8.3" ry="7.8" fill="#f0dc98" opacity="0.4"/><ellipse cx="962.9" cy="496.7" rx="11.3" ry="6.0" fill="#b85a2a" opacity="0.3"/><ellipse cx="972.2" cy="476.6" rx="5.3" ry="6.8" fill="#f0dc98" opacity="0.4"/><ellipse cx="976.5" cy="489.4" rx="7.3" ry="5.3" fill="#b85a2a" opacity="0.3"/><ellipse cx="989.0" cy="469.0" rx="11.3" ry="12.1" fill="#f0dc98" opacity="0.4"/><ellipse cx="998.3" cy="491.9" rx="15.3" ry="9.4" fill="#b85a2a" opacity="0.3"/><ellipse cx="1016.0" cy="526.0" rx="7.7" ry="8.2" fill="#f0dc98" opacity="0.4"/><ellipse cx="1022.3" cy="541.6" rx="10.5" ry="6.4" fill="#b85a2a" opacity="0.3"/><ellipse cx="1032.1" cy="509.4" rx="5.9" ry="6.8" fill="#f0dc98" opacity="0.4"/><ellipse cx="1036.9" cy="522.2" rx="8.1" ry="5.3" fill="#b85a2a" opacity="0.3"/><ellipse cx="1048.0" cy="502.6" rx="11.8" ry="10.2" fill="#f0dc98" opacity="0.4"/><ellipse cx="1057.7" cy="521.8" rx="16.2" ry="7.9" fill="#b85a2a" opacity="0.3"/><ellipse cx="1052.5" cy="553.3" rx="7.7" ry="11.1" fill="#f0dc98" opacity="0.4"/><ellipse cx="1058.8" cy="574.4" rx="10.5" ry="8.7" fill="#b85a2a" opacity="0.3"/><ellipse cx="1072.1" cy="552.5" rx="4.1" ry="6.8" fill="#f0dc98" opacity="0.4"/><ellipse cx="1075.5" cy="565.3" rx="5.7" ry="5.3" fill="#b85a2a" opacity="0.3"/><ellipse cx="1052.5" cy="608.2" rx="5.3" ry="7.3" fill="#f0dc98" opacity="0.4"/><ellipse cx="1056.8" cy="621.9" rx="7.3" ry="5.7" fill="#b85a2a" opacity="0.3"/></g>
<!--/TREES-->
<path d="M889,508 C893,500 908,499 914,506 C920,514 918,526 908,531 C898,534 889,528 888,520 C887,515 887,511 889,508Z" fill="#72cc3e" stroke="#3a8a2a" stroke-width="0.8"/><ellipse cx="899" cy="512" rx="6" ry="4" fill="#9ae060"/><ellipse cx="908" cy="522" rx="5" ry="4" fill="#5ab830"/><path d="M892,530 Q905,536 916,528" stroke="#606860" stroke-width="1.5" fill="none"/>
<path d="M908,545 C912,539 922,537 927,542 C922,547 914,548 908,545Z" fill="#8ad85a"/>
<path d="M1030,595 C1034,590 1040,592 1040,600 C1036,604 1031,602 1030,595Z" fill="#7fd24a"/>
<g><ellipse cx="845" cy="563" rx="7" ry="7.5" fill="#7d8890"/><ellipse cx="846" cy="561" rx="4" ry="4" fill="#b8c4cc"/><path d="M840,570 L848,569 L853,576 L856,583 L851,584 L846,577 L842,576Z" fill="#68747c"/><path d="M841,553 L849,550 L852,554 L844,557Z" fill="#3a5ab8"/><path d="M831,566 L834,572" stroke="#50606a" stroke-width="1.2"/><circle cx="849" cy="565" r="2" fill="#3a4048"/></g>
<!--/ISLAND-->
<g stroke="#1ef01e" stroke-width="1.3" fill="none"><line x1="884.2" y1="222.3" x2="383.8" y2="399.7"/><line x1="884.2" y1="222.3" x2="1424.1" y2="492.8"/><line x1="383.8" y1="399.7" x2="852.9" y2="908.9"/><line x1="881.8" y1="346.7" x2="884.2" y2="222.3"/><line x1="881.8" y1="346.7" x2="427.2" y2="539.4"/><line x1="881.8" y1="346.7" x2="1365.0" y2="638.1"/><line x1="427.2" y1="539.4" x2="383.8" y2="399.7"/><line x1="427.2" y1="539.4" x2="852.7" y2="1051.8"/><line x1="1424.1" y1="492.8" x2="852.9" y2="908.9"/><line x1="1365.0" y1="638.1" x2="1424.1" y2="492.8"/><line x1="1365.0" y1="638.1" x2="852.7" y2="1051.8"/><line x1="852.7" y1="1051.8" x2="852.9" y2="908.9"/></g>
<!--GIZMO-->
<g fill="#00f000">
<rect x="666.5" y="362" width="13" height="13"/>
<rect x="1089" y="398" width="13" height="13"/>
<rect x="573" y="665" width="13" height="13"/>
<rect x="1164" y="735" width="13" height="13"/>
</g>
<path d="M873.4,519 L875.5,410" stroke="#22e022" stroke-width="1.5"/>
<path d="M875.8,385.9 L865.5,409 Q875.8,415 886,409 Z" fill="#12b012"/>
<rect x="868.6" y="437.5" width="13" height="13" fill="#00f000"/>
<path d="M873.4,519 L770.8,572.4" stroke="#1414e0" stroke-width="1.5"/>
<path d="M745.7,584.5 L761,566 Q772,572 771.6,583 Z" fill="#0a0ad0"/>
<path d="M873.4,519 L963,585.3" stroke="#f01414" stroke-width="1.5"/>
<path d="M983.2,601 L959,588.5 Q960,579 967.9,578.8 Z" fill="#e00a0a"/>
<path d="M854.8,509.4 L873.4,500.5 L873.4,519 L856,527 Z" fill="#e27070" opacity="0.8" stroke="#e23030" stroke-width="0.8"/>
<path d="M873.4,500.5 L889.5,510 L889.5,526 L873.4,519 Z" fill="#3348e0" opacity="0.85" stroke="#2030d0" stroke-width="0.8"/>
<path d="M856,527 L873.4,519 L889.5,526 L871.7,540 Z" fill="#5ee05e" opacity="0.75"/>
<ellipse cx="866" cy="513" rx="7" ry="6" fill="#8a3a50" opacity="0.6"/>
<ellipse cx="880" cy="513" rx="6" ry="6" fill="#20309a" opacity="0.6"/>
<rect x="866" y="580" width="13" height="13" fill="#00f000"/>
<g fill="#ffffff">
<circle cx="862.7" cy="264.6" r="6.9"/><circle cx="880.4" cy="264.6" r="6.9"/>
<path fill-rule="evenodd" d="M857.4,272 H888.8 Q890.8,272 890.8,274 V290.3 Q890.8,292.3 888.8,292.3 H857.4 Q855.4,292.3 855.4,290.3 V274 Q855.4,272 857.4,272 Z M861,278 V287 H885 V278 Z"/>
<path d="M890.8,279 L902.3,272.7 V292.3 L890.8,286 Z"/>
</g>
<g fill="#ffffff">
<circle cx="722.1" cy="541.7" r="13.9"/>
<g stroke="#ffffff" stroke-width="2.8" stroke-linecap="round"><path d="M722.1,524.9L722.1,519.9M730.5,527.2L733.0,522.8M736.6,533.3L741.0,530.8M738.9,541.7L743.9,541.7M736.6,550.1L741.0,552.6M730.5,556.2L733.0,560.6M722.1,558.5L722.1,563.5M713.7,556.2L711.2,560.6M707.6,550.1L703.2,552.6M705.3,541.7L700.3,541.7M707.6,533.3L703.2,530.8M713.7,527.2L711.2,522.8"/></g></g>
<g>
<path d="M1291.9,161.3 L1299,176 Q1306,178 1308,168 Z" fill="#a6a6a6"/>
<ellipse cx="1304" cy="170.5" rx="5" ry="6.5" transform="rotate(-30 1304 170.5)" fill="#b4b4b4"/>
<path d="M1355,164.4 L1338,168 Q1338,177 1343,178 Z" fill="#a0a0a0"/>
<ellipse cx="1340" cy="172.5" rx="5" ry="6.5" transform="rotate(30 1340 172.5)" fill="#acacac"/>
<path d="M1303.8,171.9 L1319.4,165.6 L1336,173.8 L1336,192.5 L1319.4,202.5 L1303.8,190 Z" fill="#b2b2b2"/>
<path d="M1320,180 L1336,173.8 L1336,192.5 L1319.4,202.5 Z" fill="#a4a4a4"/>
<path d="M1303.8,171.9 L1319.4,165.6 L1336,173.8 L1320,180 Z" fill="#bcbcbc"/>
<ellipse cx="1320" cy="202.5" rx="8" ry="4" fill="#b0b0b0"/>
<path d="M1312,203 L1320,216 L1328,203 Z" fill="#a0a0a0"/>
<path d="M1320,137 L1309.8,160 Q1320,167 1330,160 Z" fill="#10c010"/>
<path d="M1274.4,206.9 L1291,190 Q1302,193 1301,202 Z" fill="#0a0ad0"/>
<path d="M1358.8,213 L1332,202 Q1332,190 1343,190 Z" fill="#e00808"/>
<text x="1320" y="135.5" font-family="Liberation Sans" font-weight="bold" font-size="17" fill="#10e010" text-anchor="middle">Y</text>
<text x="1268.8" y="216.5" font-family="Liberation Sans" font-weight="bold" font-size="16" fill="#1010e8" text-anchor="middle">Z</text>
<text x="1363" y="224" font-family="Liberation Sans" font-weight="bold" font-size="17" fill="#f01010" text-anchor="middle">X</text>
</g>
<!--/GIZMO-->
</g>
</svg><!--/SCENE-->

<!-- TITLE TOOLBAR -->
<div class="btn" style="left:836px;top:12px;width:216px;height:24px"></div>
<div class="a" style="left:891px;top:13px;width:1px;height:22px;background:#3d3d3d"></div>
<div class="a" style="left:1002px;top:13px;width:1px;height:22px;background:#3d3d3d"></div>
<div class="a" style="left:1026px;top:13px;width:1px;height:22px;background:#3d3d3d"></div>
<svg style="left:845px;top:16px" width="20" height="16" viewBox="0 0 20 16"><circle cx="10" cy="8" r="6" fill="#a0a0a0"/><ellipse cx="10" cy="8" rx="9" ry="3" transform="rotate(-22 10 8)" fill="none" stroke="#a0a0a0" stroke-width="1.4"/><ellipse cx="10" cy="8" rx="9" ry="3" transform="rotate(-22 10 8)" fill="none" stroke="#2b2b2b" stroke-width="0.6"/></svg>
<svg style="left:875px;top:21px" width="10" height="7" viewBox="0 0 10 7"><path d="M1.2 1.3l3.8 3.8 3.8-3.8" fill="none" stroke="#a8a8a8" stroke-width="1.5"/></svg>
<div class="t" style="left:913px;top:17px;color:#c8c8c8">当前场景</div>
<svg style="left:986px;top:21px" width="10" height="7" viewBox="0 0 10 7"><path d="M1.2 1.3l3.8 3.8 3.8-3.8" fill="none" stroke="#a8a8a8" stroke-width="1.5"/></svg>
<svg style="left:1009px;top:16px" width="12" height="16" viewBox="0 0 12 16"><path d="M1 1L11 8 1 15Z" fill="#a8a8a8"/></svg>
<svg style="left:1032px;top:17px" width="14" height="14" viewBox="0 0 14 14"><path d="M11.8 7.5A4.8 4.8 0 1 1 10 3.3" fill="none" stroke="#a8a8a8" stroke-width="1.6"/><path d="M8.2 0.8h4.6v4.6z" fill="#a8a8a8"/></svg>
<div class="btn" style="left:1060px;top:12px;width:24px;height:24px"></div>
<svg style="left:1066px;top:18px" width="13" height="13" viewBox="0 0 13 13"><g fill="none" stroke="#a8a8a8" stroke-width="1.3"><rect x="0.7" y="0.7" width="4.6" height="4.6"/><rect x="7.7" y="0.7" width="4.6" height="4.6"/><rect x="0.7" y="7.7" width="4.6" height="4.6"/><rect x="8.2" y="8.2" width="3.6" height="3.6"/></g><rect x="2" y="2" width="2" height="2" fill="#a8a8a8"/></svg>

<div class="btn" style="left:1658px;top:12px;width:80px;height:24px"></div>
<svg style="left:1665px;top:17px" width="13" height="13" viewBox="0 0 13 13"><path d="M12 1L1 6.5l4 1.5 1.5 4L12 1Z M5 8l7-7" fill="none" stroke="#b0b0b0" stroke-width="1.2" stroke-linejoin="round"/></svg>
<div class="t" style="left:1683px;top:17px;color:#c8c8c8">构建发布</div>
<div class="btn" style="left:1745px;top:12px;width:24px;height:24px"></div>
<svg style="left:1750px;top:18px" width="14" height="12" viewBox="0 0 14 12"><path d="M0.5 1h4.5l1.2 1.3H12v2H3L0.5 11Z" fill="#a8a8a8"/><path d="M3 5h10.5l-2.5 6H0.5Z" fill="#a8a8a8"/></svg>
<svg style="left:1780px;top:12px" width="24" height="24" viewBox="0 0 24 24"><circle cx="12" cy="12" r="12" fill="#4a4a4a"/><circle cx="12" cy="11.5" r="8.5" fill="#a8a8a8"/><path d="M6 18 L5 21 L9 19Z" fill="#a8a8a8"/><text x="12" y="16" font-family="Liberation Sans" font-weight="bold" font-size="13" fill="#2b2b2b" text-anchor="middle">?</text></svg>
<div class="a" style="left:1832px;top:22px;width:12px;height:1.5px;background:#c8c8c8"></div>
<div class="a" style="left:1866px;top:18px;width:11px;height:11px;border:1.3px solid #c8c8c8"></div>
<svg style="left:1899px;top:17px" width="12" height="12" viewBox="0 0 12 12"><path d="M1 1l10 10M11 1L1 11" stroke="#c8c8c8" stroke-width="1.3"/></svg>

<!-- SCENE TAB BAR -->
<div class="tabbar" style="left:304px;top:49px;width:1095px;height:25px"></div>
<div class="tab" style="left:304px;top:49px;width:104px;height:25px"></div>
<div class="a" style="left:489px;top:49px;width:1px;height:25px;background:#0a0a0a"></div>
<div class="a" style="left:570px;top:49px;width:1px;height:25px;background:#0a0a0a"></div>
<div class="a" style="left:663px;top:49px;width:1px;height:25px;background:#0a0a0a"></div>
<div class="a" style="left:756px;top:49px;width:1px;height:25px;background:#0a0a0a"></div>
<svg style="left:313px;top:54px" width="14" height="13" viewBox="0 0 14 13"><rect x="0" y="0" width="14" height="13" rx="1" fill="#999"/><path d="M2 2.5l3 1 1 5 2-3.5C10 3 12 2 13 2.2V2H2Z" fill="#2b2b2b"/><circle cx="4" cy="3.5" r="0.9" fill="#999"/></svg>
<div class="t" style="left:332px;top:54px;color:#d6d6d6">场景编辑器</div>
<svg style="left:418px;top:54px" width="14" height="13" viewBox="0 0 14 13"><rect width="14" height="13" rx="1" fill="#999"/><path d="M2.5 3l3 2.5-3 2.5" fill="none" stroke="#151515" stroke-width="1.4"/><path d="M7 9.5h4.5" stroke="#151515" stroke-width="1.4"/></svg>
<div class="t" style="left:437px;top:54px">控制台</div>
<svg style="left:499px;top:52px" width="15" height="16" viewBox="0 0 15 16"><g stroke="#a0a0a0" stroke-width="1.6" stroke-linecap="round"><path d="M1 1.5l13 3.5M14 1.5L1 5"/><path d="M1.5 8.5l1 3M13.5 8.5l-1 3"/></g><circle cx="7.5" cy="9.5" r="2.6" fill="#a0a0a0"/><rect x="5.5" y="12" width="4" height="3.5" fill="#a0a0a0"/></svg>
<div class="t" style="left:518px;top:54px">动画图</div>
<svg style="left:580px;top:54px" width="14" height="14" viewBox="0 0 13 13"><path d="M12 1L1 6.5l4 1.5 1.5 4L12 1Z M5 8l7-7" fill="none" stroke="#a8a8a8" stroke-width="1.3" stroke-linejoin="round"/></svg>
<div class="t" style="left:599px;top:54px">构建发布</div>
<svg style="left:673px;top:54px" width="14" height="14" viewBox="0 0 14 14"><path d="M7 0.5l1.3 1.8 2.2-.6.4 2.2 2.1.9-.9 2.1 1.2 1.9-2 1.1.1 2.3-2.3-.1-1.1 2L7 12.9l-1.9 1.2-1.1-2-2.3.1.1-2.3-2-1.1L1 6.9 0.1 4.8l2.1-.9.4-2.2 2.2.6Z" fill="#999"/><circle cx="7" cy="7.2" r="2.3" fill="#151515"/></svg>
<div class="t" style="left:692px;top:54px">项目设置</div>
<div class="ham" style="left:1381px;top:56px"><i style="top:0"></i><i style="top:4px"></i><i style="top:8px"></i></div>
<div class="sep" style="left:304px;top:73px;width:1095px;height:1px;background:#111"></div>

<!-- SCENE TOOLBAR -->
<div class="a" style="left:310px;top:80px;width:24px;height:24px;background:#2b2b2b;border-radius:3px"></div>
<div class="t" style="left:314px;top:85px;color:#c8c8c8;font-size:12px">3D</div>
<div class="a" style="left:342px;top:80px;width:120px;height:24px;background:#2b2b2b;border-radius:3px"></div>
<div class="a" style="left:342px;top:80px;width:24px;height:24px;background:#155a72;border-radius:3px 0 0 3px"></div>
<svg style="left:346px;top:84px" width="16" height="16" viewBox="0 0 16 16"><g fill="#e8e8e8"><path d="M8 0.5l3 3H9v3.5h3.5V5l3 3-3 3V9H9v3.5h2l-3 3-3-3h2V9H3.5v2l-3-3 3-3v2H7V3.5H5Z"/></g></svg>
<svg style="left:370px;top:84px" width="16" height="16" viewBox="0 0 16 16"><path d="M6.5 3.5A5 5 0 0 0 5 13" fill="none" stroke="#a8a8a8" stroke-width="1.6"/><path d="M9.5 12.5A5 5 0 0 0 11 3" fill="none" stroke="#a8a8a8" stroke-width="1.6"/><path d="M2.5 11l3 3.5 0.5-4Z M13.5 5l-3-3.5-0.5 4Z" fill="#a8a8a8"/></svg>
<svg style="left:394px;top:84px" width="16" height="16" viewBox="0 0 16 16"><path d="M4 4.5V2h10v10h-2.5" fill="none" stroke="#a8a8a8" stroke-width="1.5"/><path d="M7 5h4v4" fill="none" stroke="#a8a8a8" stroke-width="1.5"/><rect x="2" y="8" width="6" height="6" fill="#a8a8a8"/></svg>
<svg style="left:418px;top:84px" width="16" height="16" viewBox="0 0 16 16"><rect x="3" y="3" width="10" height="10" fill="none" stroke="#a8a8a8" stroke-width="1.4"/><g fill="#a8a8a8"><rect x="1" y="1" width="4" height="4"/><rect x="11" y="1" width="4" height="4"/><rect x="1" y="11" width="4" height="4"/><rect x="11" y="11" width="4" height="4"/></g></svg>
<svg style="left:442px;top:84px" width="16" height="16" viewBox="0 0 16 16"><path d="M4 2v7a4 4 0 0 0 8 0V2" fill="none" stroke="#a8a8a8" stroke-width="1.6"/><path d="M2.5 2h3M10.5 2h3" stroke="#a8a8a8" stroke-width="1.6"/></svg>
<div class="a" style="left:470px;top:80px;width:48px;height:24px;background:#2b2b2b;border-radius:3px"></div>
<svg style="left:475px;top:84px" width="16" height="16" viewBox="0 0 16 16"><path d="M3 3.5h10V13H6.5" fill="none" stroke="#a8a8a8" stroke-width="1.6"/><path d="M3 3.5v6" stroke="#a8a8a8" stroke-width="1.6"/><circle cx="3.5" cy="12.5" r="2" fill="#a8a8a8"/></svg>
<svg style="left:499px;top:84px" width="16" height="16" viewBox="0 0 16 16"><path d="M8 1.5l6 3.3v6.4L8 14.5 2 11.2V4.8Z M2 4.8l6 3.3 6-3.3 M8 8.1v6.4" fill="none" stroke="#a8a8a8" stroke-width="1.3"/><circle cx="12" cy="12" r="2.6" fill="#a8a8a8"/></svg>

<div class="a" style="left:1105px;top:80px;width:92px;height:24px;background:#2b2b2b;border-radius:3px"></div>
<div class="t" style="left:1111px;top:85px;color:#d0d0d0">正常渲染</div>
<svg style="left:1178px;top:89px" width="10" height="7" viewBox="0 0 10 7"><path d="M1.2 1.3l3.8 3.8 3.8-3.8" fill="none" stroke="#c8c8c8" stroke-width="1.5"/></svg>
<div class="a" style="left:1205px;top:80px;width:24px;height:24px;background:#155a72;border-radius:3px"></div>
<svg style="left:1210px;top:84px" width="14" height="16" viewBox="0 0 14 16"><path d="M7 1.2A5 5 0 0 0 4.2 10.3V12.5h5.6V10.3A5 5 0 0 0 7 1.2Z" fill="none" stroke="#e0e0e0" stroke-width="1.4"/><path d="M5 14.3h4" stroke="#e0e0e0" stroke-width="1.4"/><path d="M6 12V8M8 12V8" stroke="#e0e0e0" stroke-width="1"/></svg>
<div class="a" style="left:1237px;top:80px;width:100px;height:24px;background:#2b2b2b;border-radius:3px"></div>
<div class="t" style="left:1243px;top:85px;color:#d0d0d0">设计分辨率...</div>
<svg style="left:1320px;top:89px" width="10" height="7" viewBox="0 0 10 7"><path d="M1.2 1.3l3.8 3.8 3.8-3.8" fill="none" stroke="#c8c8c8" stroke-width="1.5"/></svg>
<div class="a" style="left:1345px;top:80px;width:48px;height:24px;background:#2b2b2b;border-radius:3px"></div>
<svg style="left:1349px;top:85px" width="15" height="13" viewBox="0 0 15 13"><circle cx="3.5" cy="3" r="1.8" fill="none" stroke="#a8a8a8" stroke-width="1.2"/><circle cx="7.5" cy="3" r="1.8" fill="none" stroke="#a8a8a8" stroke-width="1.2"/><rect x="1" y="5.5" width="9.5" height="6.5" fill="none" stroke="#a8a8a8" stroke-width="1.3"/><path d="M10.5 8l4-2.5v7l-4-2.5" fill="#a8a8a8"/></svg>
<svg style="left:1374px;top:85px" width="14" height="14" viewBox="0 0 14 14"><path d="M7 0.5l1.3 1.8 2.2-.6.4 2.2 2.1.9-.9 2.1 1.2 1.9-2 1.1.1 2.3-2.3-.1-1.1 2L7 12.9l-1.9 1.2-1.1-2-2.3.1.1-2.3-2-1.1L1 6.9 0.1 4.8l2.1-.9.4-2.2 2.2.6Z" fill="#a8a8a8"/><circle cx="7" cy="7.2" r="2.2" fill="#2b2b2b"/></svg>


<!-- INSPECTOR -->
<div class="tabbar" style="left:1401px;top:49px;width:518px;height:25px"></div>
<div class="tab" style="left:1401px;top:49px;width:104px;height:25px"></div>
<svg style="left:1410px;top:54px" width="13" height="14" viewBox="0 0 13 14"><path d="M6.5 0.5l6 3.3v6.4l-6 3.3-6-3.3V3.8Z" fill="#3fa6cf"/><path d="M3.5 7h6M6.5 4v6" stroke="#151515" stroke-width="1.3"/></svg>
<div class="t" style="left:1428px;top:54px;color:#45addb">属性检查器</div>
<div class="ham" style="left:1901px;top:56px"><i style="top:0"></i><i style="top:4px"></i><i style="top:8px"></i></div>
<div class="sep" style="left:1401px;top:73px;width:518px;height:1px;background:#111"></div>
<svg style="left:1411px;top:82px" width="8" height="12" viewBox="0 0 8 12"><path d="M6.5 1L1.8 6l4.7 5" fill="none" stroke="#c0c0c0" stroke-width="1.5"/></svg>
<svg style="left:1442px;top:82px" width="8" height="12" viewBox="0 0 8 12"><path d="M1.5 1l4.7 5-4.7 5" fill="none" stroke="#6a6a6a" stroke-width="1.5"/></svg>
<svg style="left:1900px;top:81px" width="14" height="14" viewBox="0 0 14 14"><path d="M8.2 1.2l4.6 4.6-1.3 0.6-2.2 2.2 0.3 2.6-1 1-6-6 1-1 2.6 0.3 2.2-2.2Z" fill="none" stroke="#b0b0b0" stroke-width="1.2" stroke-linejoin="round"/><path d="M4.6 9.4L1 13" stroke="#b0b0b0" stroke-width="1.3"/></svg>
<div class="a" style="left:1411px;top:114px;width:14px;height:14px;background:#1e1e1e;border:1px solid #3a3a3a;border-radius:2px"></div><svg style="left:1413px;top:117px" width="10" height="9" viewBox="0 0 10 9"><path d="M1 4.5l2.8 2.8L9 1.5" fill="none" stroke="#c4c4c4" stroke-width="2"/></svg>
<div class="inp" style="left:1429px;top:109px;width:476px;height:24px;background:#151515;border-radius:2px"></div>
<div class="t" style="left:1436px;top:114px;color:#e0e0e0">Reflection Probe</div>
<svg style="left:1411px;top:151px" width="10" height="7" viewBox="0 0 10 7"><path d="M1.2 1.3l3.8 3.8 3.8-3.8" fill="none" stroke="#b0b0b0" stroke-width="1.4"/></svg>
<div class="t" style="left:1427px;top:148px;color:#d8d8d8">Node</div>
<svg style="left:1858px;top:149px" width="13" height="13" viewBox="0 0 13 13"><circle cx="6.5" cy="6.5" r="5.8" fill="none" stroke="#9a9a9a" stroke-width="1.1"/><text x="6.5" y="10" font-family="Liberation Sans" font-size="9" fill="#9a9a9a" text-anchor="middle">?</text></svg>
<svg style="left:1890px;top:149px" width="4" height="12" viewBox="0 0 4 12"><g fill="#b0b0b0"><circle cx="2" cy="2" r="1.3"/><circle cx="2" cy="6" r="1.3"/><circle cx="2" cy="10" r="1.3"/></g></svg>
<div class="a" style="left:1407px;top:169px;width:498px;height:1px;background:#151515"></div>
<div class="t" style="left:1415px;top:181px;color:#d0d0d0">Position</div><div class="inp" style="left:1590px;top:176px;width:103px;height:24px;background:#151515;border-radius:2px"></div><div class="t" style="left:1596px;top:181px;color:#d8d8d8">0</div><div class="t" style="left:1682px;top:180px;color:#7a7a7a;font-family:'Liberation Serif',serif;font-size:11px">X</div><div class="inp" style="left:1697px;top:176px;width:102px;height:24px;background:#151515;border-radius:2px"></div><div class="t" style="left:1703px;top:181px;color:#d8d8d8">3.783</div><div class="t" style="left:1788px;top:180px;color:#7a7a7a;font-family:'Liberation Serif',serif;font-size:11px">Y</div><div class="inp" style="left:1803px;top:176px;width:102px;height:24px;background:#151515;border-radius:2px"></div><div class="t" style="left:1809px;top:181px;color:#d8d8d8">0</div><div class="t" style="left:1894px;top:180px;color:#7a7a7a;font-family:'Liberation Serif',serif;font-size:11px">Z</div><div class="t" style="left:1415px;top:211px;color:#d0d0d0">Rotation</div><div class="inp" style="left:1590px;top:206px;width:103px;height:24px;background:#222222;border-radius:2px"></div><div class="t" style="left:1596px;top:211px;color:#7a7a7a">0</div><div class="t" style="left:1682px;top:210px;color:#7a7a7a;font-family:'Liberation Serif',serif;font-size:11px">X</div><div class="inp" style="left:1697px;top:206px;width:102px;height:24px;background:#222222;border-radius:2px"></div><div class="t" style="left:1703px;top:211px;color:#7a7a7a">0</div><div class="t" style="left:1788px;top:210px;color:#7a7a7a;font-family:'Liberation Serif',serif;font-size:11px">Y</div><div class="inp" style="left:1803px;top:206px;width:102px;height:24px;background:#222222;border-radius:2px"></div><div class="t" style="left:1809px;top:211px;color:#7a7a7a">0</div><div class="t" style="left:1894px;top:210px;color:#7a7a7a;font-family:'Liberation Serif',serif;font-size:11px">Z</div><svg style="left:1569px;top:211px" width="10" height="12" viewBox="0 0 10 12"><path d="M2.5 5V3.5a2.5 2.5 0 0 1 5 0V5" fill="none" stroke="#c0c0c0" stroke-width="1.4"/><rect x="1" y="5" width="8" height="6.5" rx="1" fill="#c0c0c0"/></svg><div class="t" style="left:1415px;top:241px;color:#d0d0d0">Scale</div><div class="inp" style="left:1590px;top:236px;width:103px;height:24px;background:#151515;border-radius:2px"></div><div class="t" style="left:1596px;top:241px;color:#d8d8d8">1</div><div class="t" style="left:1682px;top:240px;color:#7a7a7a;font-family:'Liberation Serif',serif;font-size:11px">X</div><div class="inp" style="left:1697px;top:236px;width:102px;height:24px;background:#151515;border-radius:2px"></div><div class="t" style="left:1703px;top:241px;color:#d8d8d8">1</div><div class="t" style="left:1788px;top:240px;color:#7a7a7a;font-family:'Liberation Serif',serif;font-size:11px">Y</div><div class="inp" style="left:1803px;top:236px;width:102px;height:24px;background:#151515;border-radius:2px"></div><div class="t" style="left:1809px;top:241px;color:#d8d8d8">1</div><div class="t" style="left:1894px;top:240px;color:#7a7a7a;font-family:'Liberation Serif',serif;font-size:11px">Z</div><div class="t" style="left:1415px;top:271px;color:#d0d0d0">Mobility</div><div class="sel" style="left:1586px;top:266px;width:319px;height:24px"></div><div class="t" style="left:1593px;top:271px;color:#d8d8d8">Static</div><svg style="left:1888px;top:275px" width="10" height="7" viewBox="0 0 10 7"><path d="M1.2 1.3l3.8 3.8 3.8-3.8" fill="none" stroke="#c8c8c8" stroke-width="1.5"/></svg><div class="t" style="left:1415px;top:301px;color:#d0d0d0">Layer</div><div class="sel" style="left:1586px;top:296px;width:262px;height:24px"></div><div class="t" style="left:1593px;top:301px;color:#d8d8d8">DEFAULT</div><svg style="left:1831px;top:305px" width="10" height="7" viewBox="0 0 10 7"><path d="M1.2 1.3l3.8 3.8 3.8-3.8" fill="none" stroke="#c8c8c8" stroke-width="1.5"/></svg><div class="sel" style="left:1852px;top:296px;width:53px;height:24px"></div><div class="t" style="left:1868px;top:301px;color:#d8d8d8">Edit</div><svg style="left:1411px;top:344px" width="10" height="7" viewBox="0 0 10 7"><path d="M1.2 1.3l3.8 3.8 3.8-3.8" fill="none" stroke="#b0b0b0" stroke-width="1.4"/></svg><div class="a" style="left:1427px;top:341px;width:14px;height:14px;background:#1e1e1e;border:1px solid #3a3a3a;border-radius:2px"></div><svg style="left:1429px;top:344px" width="10" height="9" viewBox="0 0 10 9"><path d="M1 4.5l2.8 2.8L9 1.5" fill="none" stroke="#c4c4c4" stroke-width="2"/></svg><div class="t" style="left:1445px;top:341px;color:#d8d8d8">cc.ReflectionProbe</div><svg style="left:1890px;top:342px" width="4" height="12" viewBox="0 0 4 12"><g fill="#b0b0b0"><circle cx="2" cy="2" r="1.3"/><circle cx="2" cy="6" r="1.3"/><circle cx="2" cy="10" r="1.3"/></g></svg><div class="a" style="left:1407px;top:360px;width:498px;height:1px;background:#151515"></div><div class="t" style="left:1415px;top:371px;color:#d0d0d0">Size</div><div class="inp" style="left:1590px;top:366px;width:103px;height:24px;background:#151515;border-radius:2px"></div><div class="t" style="left:1596px;top:371px;color:#d8d8d8">14.377322</div><div class="t" style="left:1682px;top:370px;color:#7a7a7a;font-family:'Liberation Serif',serif;font-size:11px">X</div><div class="inp" style="left:1697px;top:366px;width:102px;height:24px;background:#151515;border-radius:2px"></div><div class="t" style="left:1703px;top:371px;color:#d8d8d8">3.517699</div><div class="t" style="left:1788px;top:370px;color:#7a7a7a;font-family:'Liberation Serif',serif;font-size:11px">Y</div><div class="inp" style="left:1803px;top:366px;width:102px;height:24px;background:#151515;border-radius:2px"></div><div class="t" style="left:1809px;top:371px;color:#d8d8d8">12.807452</div><div class="t" style="left:1894px;top:370px;color:#7a7a7a;font-family:'Liberation Serif',serif;font-size:11px">Z</div><div class="t" style="left:1415px;top:400px;color:#d0d0d0">Probe Type</div><div class="sel" style="left:1586px;top:395px;width:319px;height:24px"></div><div class="t" style="left:1593px;top:400px;color:#d8d8d8">CUBE</div><svg style="left:1888px;top:404px" width="10" height="7" viewBox="0 0 10 7"><path d="M1.2 1.3l3.8 3.8 3.8-3.8" fill="none" stroke="#c8c8c8" stroke-width="1.5"/></svg><div class="t" style="left:1415px;top:429px;color:#d0d0d0">Resolution</div><div class="sel" style="left:1586px;top:424px;width:319px;height:24px"></div><div class="t" style="left:1593px;top:429px;color:#d8d8d8">Low_256x256</div><svg style="left:1888px;top:433px" width="10" height="7" viewBox="0 0 10 7"><path d="M1.2 1.3l3.8 3.8 3.8-3.8" fill="none" stroke="#c8c8c8" stroke-width="1.5"/></svg><div class="t" style="left:1415px;top:458px;color:#d0d0d0">Clear Flag</div><div class="sel" style="left:1586px;top:453px;width:319px;height:24px"></div><div class="t" style="left:1593px;top:458px;color:#d8d8d8">SKYBOX</div><svg style="left:1888px;top:462px" width="10" height="7" viewBox="0 0 10 7"><path d="M1.2 1.3l3.8 3.8 3.8-3.8" fill="none" stroke="#c8c8c8" stroke-width="1.5"/></svg><div class="t" style="left:1415px;top:487px;color:#d0d0d0">Visibility</div><div class="sel" style="left:1586px;top:482px;width:319px;height:24px"></div><div class="t" style="left:1593px;top:487px;color:#d8d8d8">1820327937</div><svg style="left:1888px;top:491px" width="10" height="7" viewBox="0 0 10 7"><path d="M1.2 1.3l3.8 3.8 3.8-3.8" fill="none" stroke="#c8c8c8" stroke-width="1.5"/></svg><div class="t" style="left:1415px;top:516px;color:#d0d0d0">Fast Bake</div><div class="a" style="left:1586px;top:516px;width:14px;height:14px;background:#151515;border:1px solid #3a3a3a;border-radius:2px"></div><div class="a" style="left:1415px;top:542px;width:489px;height:22px;background:#3dabd2;border-radius:2px"></div><div class="t" style="left:1646px;top:546px;color:#f0f0f0">Bake</div><div class="sel" style="left:1616px;top:585px;width:80px;height:24px"></div><div class="t" style="left:1632px;top:590px;color:#d0d0d0">添加组件</div>
<!-- STATUS -->
<svg style="left:1693px;top:1021px" width="13" height="13" viewBox="0 0 13 13"><circle cx="6.5" cy="6.5" r="6.5" fill="#b8b8b8"/><text x="6.5" y="10.5" font-family="Liberation Serif" font-style="italic" font-weight="bold" font-size="11" fill="#2b2b2b" text-anchor="middle">i</text></svg>
<div class="t" style="left:1710px;top:1021px;color:#c0c0c0">0</div>
<svg style="left:1728px;top:1021px" width="13" height="13" viewBox="0 0 13 13"><circle cx="6.5" cy="6.5" r="6.5" fill="#b8b8b8"/><path d="M6.5 2.5v5" stroke="#2b2b2b" stroke-width="2"/><circle cx="6.5" cy="10" r="1.1" fill="#2b2b2b"/></svg>
<div class="t" style="left:1745px;top:1021px;color:#c0c0c0">0</div>
<svg style="left:1763px;top:1021px" width="13" height="13" viewBox="0 0 13 13"><circle cx="6.5" cy="6.5" r="6.5" fill="#b8b8b8"/><path d="M4 4l5 5M9 4l-5 5" stroke="#2b2b2b" stroke-width="1.7"/></svg>
<div class="t" style="left:1780px;top:1021px;color:#c0c0c0">0</div>
<svg style="left:1807px;top:1021px" width="12" height="14" viewBox="0 0 12 14"><path d="M6 1a4 4 0 0 0-4 4v4l-1.5 2h11L10 9V5a4 4 0 0 0-4-4Z" fill="#9a9a9a"/><circle cx="6" cy="12.5" r="1.5" fill="#9a9a9a"/></svg>
<div class="t" style="left:1826px;top:1021px;color:#9a9a9a">0</div>
<div class="t" style="left:1840px;top:1021px;color:#c8c8c8">版本 3.7.4</div>

<!-- panel separators -->
<div class="sep" style="left:0;top:49px;width:1px;height:965px"></div>
<div class="sep" style="left:302px;top:49px;width:2px;height:965px"></div>
<div class="sep" style="left:1399px;top:49px;width:2px;height:965px"></div>
<div class="sep" style="left:1919px;top:49px;width:1px;height:965px"></div>

</body></html>
